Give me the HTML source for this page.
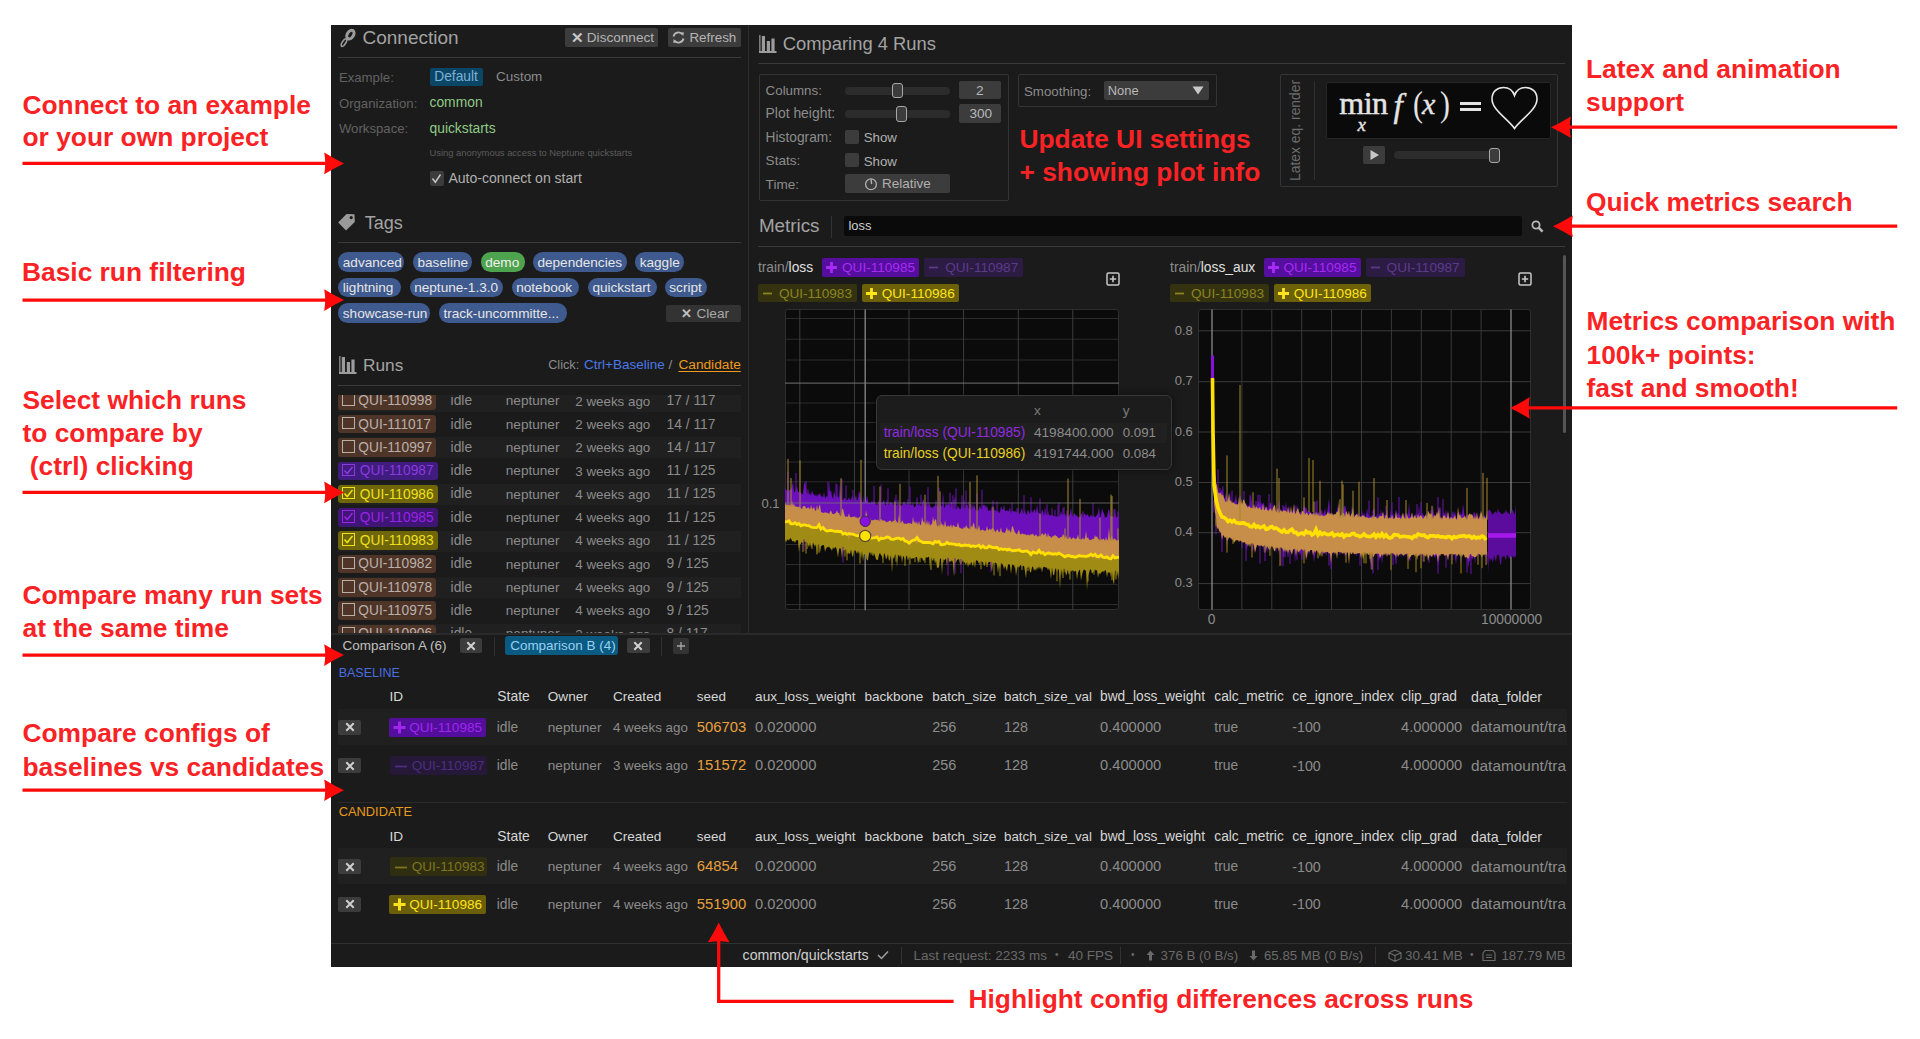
<!DOCTYPE html>
<html><head><meta charset="utf-8"><style>
html,body{margin:0;padding:0;}
body{width:1920px;height:1039px;position:relative;overflow:hidden;background:#fff;font-family:"Liberation Sans",sans-serif;}
.t{position:absolute;white-space:nowrap;line-height:1;}
.r{position:absolute;box-sizing:border-box;}
svg{position:absolute;left:0;top:0;}

</style></head><body>
<div class="r" style="left:331.0px;top:25.0px;width:1241.0px;height:942.0px;background:#1b1b1b;"></div>
<svg style="left:334px;top:25px" width="26" height="26" viewBox="0 0 26 26"><ellipse cx="16.4" cy="9.6" rx="4.7" ry="3.1" transform="rotate(-58 16.4 9.6)" fill="none" stroke="#9c9c9c" stroke-width="3.1"/><ellipse cx="10.0" cy="17.6" rx="4.3" ry="1.7" transform="rotate(-58 10 17.6)" fill="none" stroke="#9c9c9c" stroke-width="1.6"/></svg>
<div class="t" style="left:362.5px;top:28.2px;font-size:19px;color:#a3a3a3;">Connection</div>
<div class="r" style="left:565.4px;top:28.1px;width:92.9px;height:18.8px;background:#3c3c3c;border-radius:2px"></div>
<div class="t" style="left:570.5px;top:29.8px;font-size:15px;color:#c8c8c8;font-weight:bold">&#x2715;</div>
<div class="t" style="left:586.8px;top:31.2px;font-size:13.6px;color:#b4b4b4;">Disconnect</div>
<div class="r" style="left:667.5px;top:28.1px;width:73.5px;height:18.8px;background:#3c3c3c;border-radius:2px"></div>
<svg style="left:671px;top:30px" width="15" height="15" viewBox="0 0 15 15"><path d="M2.5,6.5 A5,5 0 0 1 11.5,4.5 M12.5,8.5 A5,5 0 0 1 3.5,10.5" fill="none" stroke="#b8b8b8" stroke-width="1.8"/><path d="M9.5,2.5 L12.8,2.3 L12.3,6Z M5.5,12.5 L2.2,12.7 L2.7,9Z" fill="#b8b8b8"/></svg>
<div class="t" style="left:689.4px;top:31.4px;font-size:13.4px;color:#b4b4b4;">Refresh</div>
<div class="r" style="left:338.0px;top:57.0px;width:403.0px;height:1.0px;background:#3a3a3a;"></div>
<div class="t" style="left:338.9px;top:70.6px;font-size:13.2px;color:#626262;">Example:</div>
<div class="r" style="left:429.5px;top:67.7px;width:53.1px;height:18.3px;background:#0b4666;border-radius:2px"></div>
<div class="t" style="left:434.2px;top:70.0px;font-size:13.8px;color:#7cb0d6;">Default</div>
<div class="t" style="left:496.0px;top:70.2px;font-size:13.45px;color:#8c8c8c;">Custom</div>
<div class="t" style="left:338.9px;top:96.6px;font-size:13.2px;color:#626262;">Organization:</div>
<div class="t" style="left:429.5px;top:95.7px;font-size:13.85px;color:#8fca86;">common</div>
<div class="t" style="left:338.9px;top:122.0px;font-size:13.2px;color:#626262;">Workspace:</div>
<div class="t" style="left:429.5px;top:121.5px;font-size:13.83px;color:#8fca86;">quickstarts</div>
<div class="t" style="left:429.5px;top:148.5px;font-size:9.38px;color:#5c5c5c;">Using anonymous access to Neptune quickstarts</div>
<div class="r" style="left:429.5px;top:171.0px;width:14.5px;height:14.6px;background:#3c3c3c;border-radius:2px"></div>
<svg style="left:429px;top:171px" width="15" height="15" viewBox="0 0 15 15"><path d="M3.5,7.5 L6.3,11.2 L11.5,3.5" fill="none" stroke="#c8c8c8" stroke-width="1.4"/></svg>
<div class="t" style="left:448.4px;top:171.1px;font-size:14.05px;color:#b0b0b0;">Auto-connect on start</div>
<svg style="left:337px;top:212px" width="20" height="20" viewBox="0 0 20 20"><path d="M9.5,2 L17.5,2.2 L17.8,10 L9,18.5 L1.2,10.5Z" fill="#9a9a9a"/><circle cx="14.2" cy="5.6" r="1.6" fill="#1b1b1b"/></svg>
<div class="t" style="left:364.7px;top:214.0px;font-size:18.05px;color:#a3a3a3;">Tags</div>
<div class="r" style="left:338.0px;top:242.0px;width:403.0px;height:1.0px;background:#3a3a3a;"></div>
<div class="r" style="left:338.3px;top:252.4px;width:66.2px;height:19.5px;background:#3f5a8e;border-radius:9.75px"></div>
<div class="t" style="left:342.8px;top:256.0px;font-size:13.6px;color:#e6e6e6;">advanced</div>
<div class="r" style="left:413.0px;top:252.4px;width:58.8px;height:19.5px;background:#3f5a8e;border-radius:9.75px"></div>
<div class="t" style="left:417.5px;top:256.0px;font-size:13.6px;color:#e6e6e6;">baseline</div>
<div class="r" style="left:480.7px;top:252.4px;width:43.9px;height:19.5px;background:#4ea44e;border-radius:9.75px"></div>
<div class="t" style="left:485.2px;top:256.0px;font-size:13.6px;color:#f0f0f0;">demo</div>
<div class="r" style="left:532.9px;top:252.4px;width:93.8px;height:19.5px;background:#3f5a8e;border-radius:9.75px"></div>
<div class="t" style="left:537.4px;top:256.0px;font-size:13.6px;color:#e6e6e6;">dependencies</div>
<div class="r" style="left:635.2px;top:252.4px;width:49.2px;height:19.5px;background:#3f5a8e;border-radius:9.75px"></div>
<div class="t" style="left:639.7px;top:256.0px;font-size:13.6px;color:#e6e6e6;">kaggle</div>
<div class="r" style="left:338.3px;top:277.8px;width:62.4px;height:19.5px;background:#3f5a8e;border-radius:9.75px"></div>
<div class="t" style="left:342.8px;top:281.4px;font-size:13.6px;color:#e6e6e6;">lightning</div>
<div class="r" style="left:409.7px;top:277.8px;width:93.6px;height:19.5px;background:#3f5a8e;border-radius:9.75px"></div>
<div class="t" style="left:414.2px;top:281.4px;font-size:13.6px;color:#e6e6e6;">neptune-1.3.0</div>
<div class="r" style="left:511.7px;top:277.8px;width:67.4px;height:19.5px;background:#3f5a8e;border-radius:9.75px"></div>
<div class="t" style="left:516.2px;top:281.4px;font-size:13.6px;color:#e6e6e6;">notebook</div>
<div class="r" style="left:587.9px;top:277.8px;width:68.8px;height:19.5px;background:#3f5a8e;border-radius:9.75px"></div>
<div class="t" style="left:592.4px;top:281.4px;font-size:13.6px;color:#e6e6e6;">quickstart</div>
<div class="r" style="left:664.8px;top:277.8px;width:42.5px;height:19.5px;background:#3f5a8e;border-radius:9.75px"></div>
<div class="t" style="left:669.3px;top:281.4px;font-size:13.6px;color:#e6e6e6;">script</div>
<div class="r" style="left:338.3px;top:303.2px;width:91.7px;height:19.5px;background:#3f5a8e;border-radius:9.75px"></div>
<div class="t" style="left:342.8px;top:306.8px;font-size:13.6px;color:#e6e6e6;">showcase-run</div>
<div class="r" style="left:438.9px;top:303.2px;width:127.8px;height:19.5px;background:#3f5a8e;border-radius:9.75px"></div>
<div class="t" style="left:443.4px;top:306.8px;font-size:13.6px;color:#e6e6e6;">track-uncommitte...</div>
<div class="r" style="left:666.4px;top:305.0px;width:74.4px;height:17.0px;background:#333333;border-radius:2px"></div>
<div class="t" style="left:680.5px;top:307.3px;font-size:13px;color:#c0c0c0;font-weight:bold">&#x2715;</div>
<div class="t" style="left:696.5px;top:307.1px;font-size:13.6px;color:#a8a8a8;">Clear</div>
<svg style="left:339px;top:356px" width="19" height="19" viewBox="0 0 19 19"><rect x="0" y="0" width="1.6" height="18" fill="#9c9c9c" opacity="0.75"/><rect x="2.8" y="1" width="3.2" height="16" fill="#9c9c9c"/><rect x="7.8" y="6" width="3.2" height="11" fill="#9c9c9c"/><rect x="12.4" y="3.5" width="3.2" height="13.5" fill="#9c9c9c"/><rect x="0" y="16" width="17.5" height="2" fill="#9c9c9c"/></svg>
<div class="t" style="left:363.0px;top:357.1px;font-size:17.3px;color:#a3a3a3;">Runs</div>
<div class="t" style="left:548.2px;top:358.9px;font-size:12.7px;color:#8c8c8c;">Click:</div>
<div class="t" style="left:584.0px;top:358.3px;font-size:13.5px;color:#4a78e8;">Ctrl+Baseline</div>
<div class="t" style="left:668.5px;top:358.2px;font-size:13.6px;color:#8c8c8c;">/</div>
<div class="t" style="left:678.4px;top:358.1px;font-size:13.69px;color:#ee9a1a;text-decoration:underline;text-underline-offset:1.5px">Candidate</div>
<div class="r" style="left:338.0px;top:384.6px;width:403.0px;height:1.0px;background:#3a3a3a;"></div>
<div style="position:absolute;left:331px;top:395px;width:417px;height:238px;overflow:hidden">
<div class="r" style="left:7.0px;top:-4.2px;width:403.0px;height:21.0px;background:#202020;"></div>
<div class="r" style="left:7.4px;top:-3.4px;width:97.4px;height:18.6px;background:#4f3428;border-radius:3px"></div>
<div class="r" style="left:11.0px;top:-1.4px;width:12.5px;height:12.5px;background:transparent;border:1.5px solid #b9b0aa"></div>
<div class="t" style="left:27.3px;top:-0.7px;font-size:13.72px;color:#b9b0aa;">QUI-110998</div>
<div class="t" style="left:119.6px;top:-0.8px;font-size:13.8px;color:#8c8c8c;">idle</div>
<div class="t" style="left:174.8px;top:-0.6px;font-size:13.6px;color:#8c8c8c;">neptuner</div>
<div class="t" style="left:244.3px;top:-0.4px;font-size:13.35px;color:#8c8c8c;">2 weeks ago</div>
<div class="t" style="left:335.6px;top:-0.8px;font-size:13.79px;color:#8c8c8c;">17 / 117</div>
<div class="r" style="left:7.4px;top:19.9px;width:97.4px;height:18.6px;background:#4f3428;border-radius:3px"></div>
<div class="r" style="left:11.0px;top:21.9px;width:12.5px;height:12.5px;background:transparent;border:1.5px solid #b9b0aa"></div>
<div class="t" style="left:27.3px;top:22.6px;font-size:13.72px;color:#b9b0aa;">QUI-111017</div>
<div class="t" style="left:119.6px;top:22.5px;font-size:13.8px;color:#8c8c8c;">idle</div>
<div class="t" style="left:174.8px;top:22.7px;font-size:13.6px;color:#8c8c8c;">neptuner</div>
<div class="t" style="left:244.3px;top:22.9px;font-size:13.35px;color:#8c8c8c;">2 weeks ago</div>
<div class="t" style="left:335.6px;top:22.5px;font-size:13.79px;color:#8c8c8c;">14 / 117</div>
<div class="r" style="left:7.0px;top:42.4px;width:403.0px;height:21.0px;background:#202020;"></div>
<div class="r" style="left:7.4px;top:43.2px;width:97.4px;height:18.6px;background:#4f3428;border-radius:3px"></div>
<div class="r" style="left:11.0px;top:45.2px;width:12.5px;height:12.5px;background:transparent;border:1.5px solid #b9b0aa"></div>
<div class="t" style="left:27.3px;top:45.9px;font-size:13.72px;color:#b9b0aa;">QUI-110997</div>
<div class="t" style="left:119.6px;top:45.8px;font-size:13.8px;color:#8c8c8c;">idle</div>
<div class="t" style="left:174.8px;top:46.0px;font-size:13.6px;color:#8c8c8c;">neptuner</div>
<div class="t" style="left:244.3px;top:46.2px;font-size:13.35px;color:#8c8c8c;">2 weeks ago</div>
<div class="t" style="left:335.6px;top:45.8px;font-size:13.79px;color:#8c8c8c;">14 / 117</div>
<div class="r" style="left:7.4px;top:66.5px;width:99.4px;height:18.6px;background:#401c7e;border-radius:3px"></div>
<div class="r" style="left:11.0px;top:68.5px;width:12.5px;height:12.5px;background:transparent;border:1.5px solid #8a3ade"></div>
<svg style="left:11.0px;top:68.5px" width="13" height="13" viewBox="0 0 13 13"><path d="M2.5,6.5 L5.2,9.5 L10.5,3" fill="none" stroke="#8a3ade" stroke-width="1.5"/></svg>
<div class="t" style="left:28.8px;top:69.2px;font-size:13.72px;color:#8a3ade;">QUI-110987</div>
<div class="t" style="left:119.6px;top:69.1px;font-size:13.8px;color:#8c8c8c;">idle</div>
<div class="t" style="left:174.8px;top:69.3px;font-size:13.6px;color:#8c8c8c;">neptuner</div>
<div class="t" style="left:244.3px;top:69.5px;font-size:13.35px;color:#8c8c8c;">3 weeks ago</div>
<div class="t" style="left:335.6px;top:69.1px;font-size:13.79px;color:#8c8c8c;">11 / 125</div>
<div class="r" style="left:7.0px;top:89.0px;width:403.0px;height:21.0px;background:#202020;"></div>
<div class="r" style="left:7.4px;top:89.8px;width:99.4px;height:18.6px;background:#6e6608;border-radius:3px"></div>
<div class="r" style="left:11.0px;top:91.8px;width:12.5px;height:12.5px;background:transparent;border:1.5px solid #f0e020"></div>
<svg style="left:11.0px;top:91.80000000000001px" width="13" height="13" viewBox="0 0 13 13"><path d="M2.5,6.5 L5.2,9.5 L10.5,3" fill="none" stroke="#f0e020" stroke-width="1.5"/></svg>
<div class="t" style="left:28.8px;top:92.5px;font-size:13.72px;color:#f0e020;">QUI-110986</div>
<div class="t" style="left:119.6px;top:92.4px;font-size:13.8px;color:#8c8c8c;">idle</div>
<div class="t" style="left:174.8px;top:92.6px;font-size:13.6px;color:#8c8c8c;">neptuner</div>
<div class="t" style="left:244.3px;top:92.8px;font-size:13.35px;color:#8c8c8c;">4 weeks ago</div>
<div class="t" style="left:335.6px;top:92.4px;font-size:13.79px;color:#8c8c8c;">11 / 125</div>
<div class="r" style="left:7.4px;top:113.1px;width:99.4px;height:18.6px;background:#3f1676;border-radius:3px"></div>
<div class="r" style="left:11.0px;top:115.1px;width:12.5px;height:12.5px;background:transparent;border:1.5px solid #9c22e6"></div>
<svg style="left:11.0px;top:115.10000000000002px" width="13" height="13" viewBox="0 0 13 13"><path d="M2.5,6.5 L5.2,9.5 L10.5,3" fill="none" stroke="#9c22e6" stroke-width="1.5"/></svg>
<div class="t" style="left:28.8px;top:115.8px;font-size:13.72px;color:#9c22e6;">QUI-110985</div>
<div class="t" style="left:119.6px;top:115.7px;font-size:13.8px;color:#8c8c8c;">idle</div>
<div class="t" style="left:174.8px;top:115.9px;font-size:13.6px;color:#8c8c8c;">neptuner</div>
<div class="t" style="left:244.3px;top:116.1px;font-size:13.35px;color:#8c8c8c;">4 weeks ago</div>
<div class="t" style="left:335.6px;top:115.7px;font-size:13.79px;color:#8c8c8c;">11 / 125</div>
<div class="r" style="left:7.0px;top:135.6px;width:403.0px;height:21.0px;background:#202020;"></div>
<div class="r" style="left:7.4px;top:136.4px;width:99.4px;height:18.6px;background:#6e6608;border-radius:3px"></div>
<div class="r" style="left:11.0px;top:138.4px;width:12.5px;height:12.5px;background:transparent;border:1.5px solid #f0e020"></div>
<svg style="left:11.0px;top:138.4000000000001px" width="13" height="13" viewBox="0 0 13 13"><path d="M2.5,6.5 L5.2,9.5 L10.5,3" fill="none" stroke="#f0e020" stroke-width="1.5"/></svg>
<div class="t" style="left:28.8px;top:139.1px;font-size:13.72px;color:#f0e020;">QUI-110983</div>
<div class="t" style="left:119.6px;top:139.0px;font-size:13.8px;color:#8c8c8c;">idle</div>
<div class="t" style="left:174.8px;top:139.2px;font-size:13.6px;color:#8c8c8c;">neptuner</div>
<div class="t" style="left:244.3px;top:139.4px;font-size:13.35px;color:#8c8c8c;">4 weeks ago</div>
<div class="t" style="left:335.6px;top:139.0px;font-size:13.79px;color:#8c8c8c;">11 / 125</div>
<div class="r" style="left:7.4px;top:159.7px;width:97.4px;height:18.6px;background:#4f3428;border-radius:3px"></div>
<div class="r" style="left:11.0px;top:161.7px;width:12.5px;height:12.5px;background:transparent;border:1.5px solid #b9b0aa"></div>
<div class="t" style="left:27.3px;top:162.4px;font-size:13.72px;color:#b9b0aa;">QUI-110982</div>
<div class="t" style="left:119.6px;top:162.3px;font-size:13.8px;color:#8c8c8c;">idle</div>
<div class="t" style="left:174.8px;top:162.5px;font-size:13.6px;color:#8c8c8c;">neptuner</div>
<div class="t" style="left:244.3px;top:162.7px;font-size:13.35px;color:#8c8c8c;">4 weeks ago</div>
<div class="t" style="left:335.6px;top:162.3px;font-size:13.79px;color:#8c8c8c;">9 / 125</div>
<div class="r" style="left:7.0px;top:182.2px;width:403.0px;height:21.0px;background:#202020;"></div>
<div class="r" style="left:7.4px;top:183.0px;width:97.4px;height:18.6px;background:#4f3428;border-radius:3px"></div>
<div class="r" style="left:11.0px;top:185.0px;width:12.5px;height:12.5px;background:transparent;border:1.5px solid #b9b0aa"></div>
<div class="t" style="left:27.3px;top:185.7px;font-size:13.72px;color:#b9b0aa;">QUI-110978</div>
<div class="t" style="left:119.6px;top:185.6px;font-size:13.8px;color:#8c8c8c;">idle</div>
<div class="t" style="left:174.8px;top:185.8px;font-size:13.6px;color:#8c8c8c;">neptuner</div>
<div class="t" style="left:244.3px;top:186.0px;font-size:13.35px;color:#8c8c8c;">4 weeks ago</div>
<div class="t" style="left:335.6px;top:185.6px;font-size:13.79px;color:#8c8c8c;">9 / 125</div>
<div class="r" style="left:7.4px;top:206.3px;width:97.4px;height:18.6px;background:#4f3428;border-radius:3px"></div>
<div class="r" style="left:11.0px;top:208.3px;width:12.5px;height:12.5px;background:transparent;border:1.5px solid #b9b0aa"></div>
<div class="t" style="left:27.3px;top:209.0px;font-size:13.72px;color:#b9b0aa;">QUI-110975</div>
<div class="t" style="left:119.6px;top:208.9px;font-size:13.8px;color:#8c8c8c;">idle</div>
<div class="t" style="left:174.8px;top:209.1px;font-size:13.6px;color:#8c8c8c;">neptuner</div>
<div class="t" style="left:244.3px;top:209.3px;font-size:13.35px;color:#8c8c8c;">4 weeks ago</div>
<div class="t" style="left:335.6px;top:208.9px;font-size:13.79px;color:#8c8c8c;">9 / 125</div>
<div class="r" style="left:7.0px;top:228.8px;width:403.0px;height:21.0px;background:#202020;"></div>
<div class="r" style="left:7.4px;top:229.6px;width:97.4px;height:18.6px;background:#4f3428;border-radius:3px"></div>
<div class="r" style="left:11.0px;top:231.6px;width:12.5px;height:12.5px;background:transparent;border:1.5px solid #b9b0aa"></div>
<div class="t" style="left:27.3px;top:232.3px;font-size:13.72px;color:#b9b0aa;">QUI-110906</div>
<div class="t" style="left:119.6px;top:232.2px;font-size:13.8px;color:#8c8c8c;">idle</div>
<div class="t" style="left:174.8px;top:232.4px;font-size:13.6px;color:#8c8c8c;">neptuner</div>
<div class="t" style="left:244.3px;top:232.6px;font-size:13.35px;color:#8c8c8c;">2 weeks ago</div>
<div class="t" style="left:335.6px;top:232.2px;font-size:13.79px;color:#8c8c8c;">8 / 117</div>
</div>
<div class="r" style="left:748.2px;top:25.0px;width:1.0px;height:608.0px;background:#2e2e2e;"></div>
<svg style="left:759px;top:35px" width="19" height="19" viewBox="0 0 19 19"><rect x="0" y="0" width="1.6" height="18" fill="#9c9c9c" opacity="0.75"/><rect x="2.8" y="1" width="3.2" height="16" fill="#9c9c9c"/><rect x="7.8" y="6" width="3.2" height="11" fill="#9c9c9c"/><rect x="12.4" y="3.5" width="3.2" height="13.5" fill="#9c9c9c"/><rect x="0" y="16" width="17.5" height="2" fill="#9c9c9c"/></svg>
<div class="t" style="left:782.8px;top:34.9px;font-size:18.38px;color:#a3a3a3;">Comparing 4 Runs</div>
<div class="r" style="left:757.8px;top:63.3px;width:807.2px;height:1.0px;background:#3a3a3a;"></div>
<div class="r" style="left:758.8px;top:74.3px;width:249.8px;height:126.4px;background:transparent;border:1px solid #343434;border-radius:2px"></div>
<div class="t" style="left:765.6px;top:84.4px;font-size:13.33px;color:#8c8c8c;">Columns:</div>
<div class="t" style="left:765.6px;top:106.9px;font-size:13.9px;color:#8c8c8c;">Plot height:</div>
<div class="t" style="left:765.6px;top:130.7px;font-size:13.76px;color:#8c8c8c;">Histogram:</div>
<div class="t" style="left:765.6px;top:154.0px;font-size:13.6px;color:#8c8c8c;">Stats:</div>
<div class="t" style="left:765.6px;top:177.7px;font-size:13.6px;color:#8c8c8c;">Time:</div>
<div class="r" style="left:844.8px;top:86.6px;width:105.6px;height:8.0px;background:#2c2c2c;border-radius:4px"></div>
<div class="r" style="left:891.9px;top:82.8px;width:11.4px;height:15.7px;background:#3c3c3c;border:1.4px solid #a8a8a8;border-radius:3px"></div>
<div class="r" style="left:844.8px;top:109.8px;width:105.6px;height:8.0px;background:#2c2c2c;border-radius:4px"></div>
<div class="r" style="left:896.0px;top:106.0px;width:11.4px;height:15.7px;background:#3c3c3c;border:1.4px solid #a8a8a8;border-radius:3px"></div>
<div class="r" style="left:959.2px;top:81.1px;width:42.0px;height:18.4px;background:#3c3c3c;border-radius:2px"></div>
<div class="t" style="left:976.0px;top:84.0px;font-size:13.6px;color:#b8b8b8;">2</div>
<div class="r" style="left:959.2px;top:104.1px;width:42.0px;height:18.7px;background:#3c3c3c;border-radius:2px"></div>
<div class="t" style="left:969.5px;top:107.3px;font-size:13.6px;color:#b8b8b8;">300</div>
<div class="r" style="left:844.8px;top:129.6px;width:14.2px;height:14.4px;background:#3c3c3c;border-radius:2px"></div>
<div class="t" style="left:863.7px;top:131.2px;font-size:13.3px;color:#b0b0b0;">Show</div>
<div class="r" style="left:844.8px;top:152.9px;width:14.2px;height:14.4px;background:#3c3c3c;border-radius:2px"></div>
<div class="t" style="left:863.7px;top:154.5px;font-size:13.3px;color:#b0b0b0;">Show</div>
<div class="r" style="left:844.8px;top:174.0px;width:105.6px;height:18.5px;background:#3c3c3c;border-radius:2px"></div>
<svg style="left:864px;top:176.5px" width="14" height="14" viewBox="0 0 14 14"><circle cx="7" cy="7.3" r="5.4" fill="none" stroke="#b0b0b0" stroke-width="1.3"/><path d="M7,2 L7.6,7.2" stroke="#b0b0b0" stroke-width="1.4"/></svg>
<div class="t" style="left:882.0px;top:177.4px;font-size:13.5px;color:#b0b0b0;">Relative</div>
<div class="r" style="left:1017.8px;top:74.3px;width:199.4px;height:32.9px;background:transparent;border:1px solid #343434;border-radius:2px"></div>
<div class="t" style="left:1024.0px;top:84.7px;font-size:13.29px;color:#8c8c8c;">Smoothing:</div>
<div class="r" style="left:1104.2px;top:81.3px;width:104.8px;height:18.3px;background:#3c3c3c;border-radius:2px"></div>
<div class="t" style="left:1107.8px;top:84.7px;font-size:12.9px;color:#b8b8b8;">None</div>
<svg style="left:1192px;top:85.5px" width="12" height="9" viewBox="0 0 12 9"><path d="M0.5,0.5 H11.5 L6,8.5Z" fill="#c8c8c8"/></svg>
<div class="r" style="left:1280.0px;top:74.3px;width:278.4px;height:113.1px;background:transparent;border:1px solid #343434;border-radius:2px"></div>
<div class="t" style="left:1289.0px;top:180.7px;font-size:13.9px;color:#6c6c6c;transform:rotate(-90deg);transform-origin:0 0;">Latex eq. render</div>
<div class="r" style="left:1313.8px;top:81.2px;width:1.0px;height:98.6px;background:#303030;"></div>
<div class="r" style="left:1326.0px;top:81.9px;width:224.5px;height:56.7px;background:#0a0a0a;border:1px solid #262626;border-radius:2px"></div>
<div class="t" style="left:1339.3px;top:87.2px;font-size:32px;color:#e4e4e4;font-family:Liberation Serif,serif;letter-spacing:-0.5px;-webkit-text-stroke:0.5px #e4e4e4">min</div>
<div class="t" style="left:1357.5px;top:115.4px;font-size:19px;color:#e4e4e4;font-family:Liberation Serif,serif;font-style:italic;-webkit-text-stroke:0.4px #e4e4e4">x</div>
<div class="t" style="left:1393.5px;top:89.6px;font-size:33px;color:#e4e4e4;font-family:Liberation Serif,serif;font-style:italic;-webkit-text-stroke:0.4px #e4e4e4">f</div>
<div class="t" style="left:1412.5px;top:86.9px;font-size:35px;color:#e4e4e4;font-family:Liberation Serif,serif;transform:scaleX(0.85);transform-origin:0 0">(</div>
<div class="t" style="left:1422.0px;top:89.4px;font-size:30px;color:#e4e4e4;font-family:Liberation Serif,serif;font-style:italic;-webkit-text-stroke:0.4px #e4e4e4">x</div>
<div class="t" style="left:1439.5px;top:86.9px;font-size:35px;color:#e4e4e4;font-family:Liberation Serif,serif;transform:scaleX(0.85);transform-origin:0 0">)</div>
<div class="r" style="left:1460.0px;top:101.8px;width:21.3px;height:2.8px;background:#e4e4e4;"></div>
<div class="r" style="left:1460.0px;top:108.2px;width:21.3px;height:2.8px;background:#e4e4e4;"></div>
<svg style="left:1490px;top:86px" width="50" height="45" viewBox="0 0 50 45"><path d="M24.5,42.5 C18,33 2,24 2,13 C2,5.5 7.5,1.5 13.5,1.5 C19,1.5 23,5 24.5,9.5 C26,5 30,1.5 35.5,1.5 C41.5,1.5 47,5.5 47,13 C47,24 31,33 24.5,42.5Z" fill="none" stroke="#e8e8e8" stroke-width="1.6"/></svg>
<div class="r" style="left:1363.1px;top:145.5px;width:22.4px;height:18.9px;background:#3c3c3c;border-radius:2px"></div>
<svg style="left:1368px;top:149px" width="12" height="12" viewBox="0 0 12 12"><path d="M2.5,1 L11,6 L2.5,11Z" fill="#c8c8c8"/></svg>
<div class="r" style="left:1394.0px;top:151.2px;width:105.0px;height:8.0px;background:#2c2c2c;border-radius:4px"></div>
<div class="r" style="left:1488.6px;top:147.9px;width:11.4px;height:14.8px;background:#3c3c3c;border:1.4px solid #a8a8a8;border-radius:3px"></div>
<div class="t" style="left:758.9px;top:217.2px;font-size:18.82px;color:#a3a3a3;">Metrics</div>
<div class="r" style="left:831.3px;top:216.0px;width:1.0px;height:22.3px;background:#333333;"></div>
<div class="r" style="left:844.3px;top:216.0px;width:677.7px;height:19.7px;background:#0a0a0a;border-radius:2px"></div>
<div class="t" style="left:848.4px;top:220.1px;font-size:12.93px;color:#d0d0d0;">loss</div>
<svg style="left:1530px;top:219px" width="16" height="16" viewBox="0 0 16 16"><circle cx="6" cy="6" r="3.6" fill="none" stroke="#b8b8b8" stroke-width="1.8"/><path d="M8.6,8.6 L12.6,12.6" stroke="#b8b8b8" stroke-width="2.6"/></svg>
<div class="r" style="left:757.8px;top:246.2px;width:807.2px;height:1.0px;background:#3a3a3a;"></div>
<div class="t" style="left:757.9px;top:260.9px;font-size:13.8px;color:#8c8c8c;">train/<span style="color:#e0e0e0">loss</span></div>
<div class="t" style="left:1170.1px;top:260.9px;font-size:13.8px;color:#8c8c8c;">train/<span style="color:#e0e0e0">loss_aux</span></div>
<div class="r" style="left:822.2px;top:258.3px;width:97.0px;height:18.4px;background:#560e9e;border-radius:2px"></div>
<svg style="left:825.2px;top:261.3px" width="13" height="13" viewBox="0 0 13 13"><path d="M6.5,1 V12 M1,6.5 H12" stroke="#a62cf4" stroke-width="2.8"/></svg>
<div class="t" style="left:842.0px;top:260.8px;font-size:13.6px;color:#a62cf4;">QUI-110985</div>
<div class="r" style="left:924.2px;top:258.3px;width:99.3px;height:18.4px;background:#2c1c44;border-radius:2px"></div>
<svg style="left:927.2px;top:261.3px" width="13" height="13" viewBox="0 0 13 13"><path d="M2,6.5 H11" stroke="#5c3a8a" stroke-width="1.8"/></svg>
<div class="t" style="left:945.2px;top:260.8px;font-size:13.6px;color:#5c3a8a;">QUI-110987</div>
<div class="r" style="left:757.9px;top:283.6px;width:99.0px;height:18.9px;background:#35330f;border-radius:2px"></div>
<svg style="left:760.9px;top:286.6px" width="13" height="13" viewBox="0 0 13 13"><path d="M2,6.5 H11" stroke="#8a8420" stroke-width="1.8"/></svg>
<div class="t" style="left:778.9px;top:286.6px;font-size:13.6px;color:#8a8420;">QUI-110983</div>
<div class="r" style="left:861.9px;top:283.6px;width:96.9px;height:18.9px;background:#6c6008;border-radius:2px"></div>
<svg style="left:864.9px;top:286.6px" width="13" height="13" viewBox="0 0 13 13"><path d="M6.5,1 V12 M1,6.5 H12" stroke="#ffe61a" stroke-width="2.8"/></svg>
<div class="t" style="left:881.7px;top:286.6px;font-size:13.6px;color:#ffe61a;">QUI-110986</div>
<div class="r" style="left:1263.6px;top:258.3px;width:97.0px;height:18.4px;background:#560e9e;border-radius:2px"></div>
<svg style="left:1266.6px;top:261.3px" width="13" height="13" viewBox="0 0 13 13"><path d="M6.5,1 V12 M1,6.5 H12" stroke="#a62cf4" stroke-width="2.8"/></svg>
<div class="t" style="left:1283.4px;top:260.8px;font-size:13.6px;color:#a62cf4;">QUI-110985</div>
<div class="r" style="left:1365.6px;top:258.3px;width:99.3px;height:18.4px;background:#2c1c44;border-radius:2px"></div>
<svg style="left:1368.6px;top:261.3px" width="13" height="13" viewBox="0 0 13 13"><path d="M2,6.5 H11" stroke="#5c3a8a" stroke-width="1.8"/></svg>
<div class="t" style="left:1386.6px;top:260.8px;font-size:13.6px;color:#5c3a8a;">QUI-110987</div>
<div class="r" style="left:1170.0px;top:283.6px;width:99.0px;height:18.9px;background:#35330f;border-radius:2px"></div>
<svg style="left:1173.0px;top:286.6px" width="13" height="13" viewBox="0 0 13 13"><path d="M2,6.5 H11" stroke="#8a8420" stroke-width="1.8"/></svg>
<div class="t" style="left:1191.0px;top:286.6px;font-size:13.6px;color:#8a8420;">QUI-110983</div>
<div class="r" style="left:1274.0px;top:283.6px;width:96.9px;height:18.9px;background:#6c6008;border-radius:2px"></div>
<svg style="left:1277.0px;top:286.6px" width="13" height="13" viewBox="0 0 13 13"><path d="M6.5,1 V12 M1,6.5 H12" stroke="#ffe61a" stroke-width="2.8"/></svg>
<div class="t" style="left:1293.8px;top:286.6px;font-size:13.6px;color:#ffe61a;">QUI-110986</div>
<svg style="left:1106.3px;top:272px" width="14" height="14" viewBox="0 0 14 14"><rect x="1" y="1" width="12" height="12" rx="1.5" fill="none" stroke="#c8c8c8" stroke-width="1.5"/><path d="M7,3.8 V10.2 M3.8,7 H10.2" stroke="#c8c8c8" stroke-width="1.6"/></svg>
<svg style="left:1518.2px;top:272px" width="14" height="14" viewBox="0 0 14 14"><rect x="1" y="1" width="12" height="12" rx="1.5" fill="none" stroke="#c8c8c8" stroke-width="1.5"/><path d="M7,3.8 V10.2 M3.8,7 H10.2" stroke="#c8c8c8" stroke-width="1.6"/></svg>
<div class="r" style="left:785.0px;top:309.3px;width:334.0px;height:301.2px;background:#0b0b0b;border:1px solid #2e2e2e;border-radius:3px"></div>
<svg style="left:0;top:0" width="1920" height="1039"><clipPath id="cl"><rect x="785" y="309.3" width="334" height="301.2"/></clipPath><g clip-path="url(#cl)"><line x1="785" y1="318.5" x2="1119" y2="318.5" stroke="#2c2c2c" stroke-width="1"/><line x1="785" y1="339.2" x2="1119" y2="339.2" stroke="#2c2c2c" stroke-width="1"/><line x1="785" y1="360.0" x2="1119" y2="360.0" stroke="#2c2c2c" stroke-width="1"/><line x1="785" y1="403.0" x2="1119" y2="403.0" stroke="#2c2c2c" stroke-width="1"/><line x1="785" y1="422.5" x2="1119" y2="422.5" stroke="#2c2c2c" stroke-width="1"/><line x1="785" y1="442.0" x2="1119" y2="442.0" stroke="#2c2c2c" stroke-width="1"/><line x1="785" y1="462.0" x2="1119" y2="462.0" stroke="#2c2c2c" stroke-width="1"/><line x1="785" y1="481.8" x2="1119" y2="481.8" stroke="#2c2c2c" stroke-width="1"/><line x1="785" y1="524.0" x2="1119" y2="524.0" stroke="#2c2c2c" stroke-width="1"/><line x1="785" y1="544.5" x2="1119" y2="544.5" stroke="#2c2c2c" stroke-width="1"/><line x1="785" y1="564.5" x2="1119" y2="564.5" stroke="#2c2c2c" stroke-width="1"/><line x1="785" y1="584.6" x2="1119" y2="584.6" stroke="#2c2c2c" stroke-width="1"/><line x1="785" y1="604.5" x2="1119" y2="604.5" stroke="#2c2c2c" stroke-width="1"/><line x1="799.8" y1="309.3" x2="799.8" y2="610.5" stroke="#3c3c3c" stroke-width="1"/><line x1="854.5" y1="309.3" x2="854.5" y2="610.5" stroke="#3c3c3c" stroke-width="1"/><line x1="909.0" y1="309.3" x2="909.0" y2="610.5" stroke="#3c3c3c" stroke-width="1"/><line x1="963.6" y1="309.3" x2="963.6" y2="610.5" stroke="#3c3c3c" stroke-width="1"/><line x1="1018.3" y1="309.3" x2="1018.3" y2="610.5" stroke="#3c3c3c" stroke-width="1"/><line x1="1072.8" y1="309.3" x2="1072.8" y2="610.5" stroke="#3c3c3c" stroke-width="1"/><line x1="865.2" y1="309.3" x2="865.2" y2="610.5" stroke="#8a8a8a" stroke-width="1.3"/><polygon points="785.0,488.5 786.0,489.2 787.0,490.7 788.0,491.6 789.0,489.8 790.0,490.2 791.0,489.1 792.0,485.9 793.0,481.7 794.0,491.7 795.0,492.8 796.0,489.0 797.0,485.8 798.0,491.9 799.0,492.0 800.0,493.0 801.0,492.0 802.0,494.4 803.0,493.8 804.0,484.1 805.0,481.8 806.0,487.4 807.0,494.4 808.0,491.6 809.0,495.3 810.0,492.2 811.0,495.8 812.0,489.8 813.0,494.0 814.0,494.0 815.0,496.4 816.0,494.0 817.0,497.1 818.0,493.7 819.0,495.6 820.0,492.2 821.0,496.7 822.0,495.7 823.0,497.8 824.0,491.2 825.0,498.5 826.0,497.0 827.0,495.9 828.0,497.5 829.0,480.3 830.0,492.1 831.0,489.9 832.0,496.6 833.0,499.1 834.0,490.7 835.0,495.0 836.0,498.6 837.0,493.9 838.0,498.0 839.0,496.6 840.0,482.3 841.0,496.0 842.0,500.1 843.0,499.9 844.0,498.5 845.0,497.4 846.0,501.0 847.0,499.7 848.0,499.9 849.0,497.3 850.0,499.5 851.0,500.3 852.0,495.7 853.0,498.2 854.0,501.7 855.0,497.9 856.0,495.1 857.0,501.0 858.0,499.2 859.0,490.5 860.0,493.8 861.0,499.3 862.0,501.4 863.0,502.6 864.0,495.5 865.0,502.7 866.0,501.9 867.0,495.3 868.0,500.9 869.0,502.7 870.0,503.3 871.0,503.1 872.0,499.9 873.0,503.7 874.0,499.8 875.0,503.0 876.0,504.6 877.0,504.7 878.0,503.4 879.0,499.6 880.0,503.3 881.0,502.2 882.0,503.3 883.0,501.4 884.0,499.8 885.0,504.9 886.0,505.3 887.0,498.6 888.0,504.4 889.0,505.3 890.0,501.0 891.0,503.0 892.0,503.3 893.0,503.8 894.0,505.6 895.0,496.3 896.0,505.9 897.0,504.8 898.0,504.5 899.0,503.1 900.0,506.4 901.0,505.6 902.0,505.3 903.0,503.4 904.0,501.1 905.0,503.5 906.0,503.7 907.0,505.0 908.0,502.1 909.0,506.2 910.0,505.0 911.0,503.9 912.0,505.5 913.0,502.3 914.0,507.0 915.0,507.3 916.0,504.6 917.0,502.5 918.0,506.2 919.0,502.8 920.0,505.6 921.0,506.6 922.0,504.7 923.0,498.8 924.0,501.3 925.0,506.9 926.0,501.2 927.0,504.3 928.0,507.7 929.0,502.3 930.0,505.1 931.0,508.1 932.0,507.0 933.0,508.0 934.0,505.7 935.0,506.3 936.0,498.7 937.0,507.3 938.0,502.8 939.0,507.8 940.0,506.6 941.0,504.0 942.0,507.2 943.0,491.3 944.0,507.5 945.0,507.6 946.0,501.4 947.0,505.8 948.0,503.4 949.0,502.9 950.0,508.2 951.0,502.7 952.0,501.6 953.0,508.9 954.0,508.0 955.0,508.0 956.0,509.7 957.0,508.6 958.0,505.8 959.0,508.6 960.0,508.7 961.0,509.1 962.0,500.8 963.0,508.5 964.0,506.7 965.0,509.6 966.0,504.7 967.0,504.5 968.0,507.7 969.0,508.4 970.0,509.6 971.0,510.2 972.0,503.5 973.0,508.7 974.0,503.2 975.0,507.9 976.0,510.4 977.0,511.0 978.0,510.9 979.0,508.3 980.0,505.3 981.0,509.5 982.0,508.6 983.0,504.2 984.0,505.6 985.0,505.1 986.0,508.1 987.0,505.3 988.0,510.7 989.0,510.7 990.0,510.0 991.0,510.9 992.0,505.6 993.0,511.1 994.0,507.9 995.0,511.2 996.0,509.4 997.0,512.5 998.0,509.9 999.0,512.8 1000.0,512.5 1001.0,505.8 1002.0,509.1 1003.0,509.9 1004.0,504.3 1005.0,511.0 1006.0,511.1 1007.0,509.8 1008.0,511.8 1009.0,510.8 1010.0,507.0 1011.0,513.5 1012.0,511.1 1013.0,510.7 1014.0,511.9 1015.0,510.5 1016.0,512.5 1017.0,512.3 1018.0,512.5 1019.0,514.0 1020.0,513.7 1021.0,510.7 1022.0,507.6 1023.0,513.3 1024.0,513.3 1025.0,509.3 1026.0,514.4 1027.0,514.2 1028.0,511.1 1029.0,512.2 1030.0,514.0 1031.0,512.2 1032.0,509.7 1033.0,513.4 1034.0,509.1 1035.0,510.0 1036.0,512.9 1037.0,504.0 1038.0,512.2 1039.0,513.0 1040.0,514.8 1041.0,514.7 1042.0,509.2 1043.0,511.2 1044.0,516.1 1045.0,506.6 1046.0,514.5 1047.0,515.4 1048.0,510.2 1049.0,515.1 1050.0,515.5 1051.0,514.9 1052.0,515.3 1053.0,515.5 1054.0,516.6 1055.0,516.2 1056.0,516.2 1057.0,516.8 1058.0,515.5 1059.0,517.1 1060.0,515.4 1061.0,510.8 1062.0,515.5 1063.0,513.3 1064.0,515.7 1065.0,512.6 1066.0,517.4 1067.0,512.2 1068.0,517.2 1069.0,515.8 1070.0,514.0 1071.0,507.1 1072.0,515.7 1073.0,516.4 1074.0,513.4 1075.0,513.7 1076.0,515.7 1077.0,515.1 1078.0,517.6 1079.0,517.1 1080.0,517.1 1081.0,514.1 1082.0,513.2 1083.0,517.9 1084.0,513.8 1085.0,513.8 1086.0,516.0 1087.0,514.2 1088.0,514.6 1089.0,517.0 1090.0,516.8 1091.0,514.3 1092.0,517.1 1093.0,516.5 1094.0,515.6 1095.0,517.5 1096.0,515.9 1097.0,515.3 1098.0,512.7 1099.0,506.7 1100.0,517.9 1101.0,515.3 1102.0,508.1 1103.0,511.9 1104.0,513.1 1105.0,517.8 1106.0,517.3 1107.0,516.8 1108.0,511.5 1109.0,508.4 1110.0,515.2 1111.0,516.1 1112.0,516.7 1113.0,516.3 1114.0,517.2 1115.0,511.8 1116.0,518.0 1117.0,516.5 1118.0,516.8 1119.0,510.0 1119.0,549.6 1118.0,549.7 1117.0,550.1 1116.0,549.5 1115.0,550.0 1114.0,549.6 1113.0,550.1 1112.0,552.0 1111.0,549.1 1110.0,549.3 1109.0,551.7 1108.0,549.1 1107.0,549.1 1106.0,549.4 1105.0,549.0 1104.0,549.6 1103.0,549.4 1102.0,549.5 1101.0,548.9 1100.0,551.3 1099.0,550.5 1098.0,548.8 1097.0,550.7 1096.0,548.9 1095.0,550.1 1094.0,551.0 1093.0,548.5 1092.0,549.2 1091.0,548.7 1090.0,548.2 1089.0,548.4 1088.0,548.4 1087.0,549.0 1086.0,548.8 1085.0,551.3 1084.0,548.2 1083.0,548.7 1082.0,548.1 1081.0,549.6 1080.0,548.0 1079.0,548.6 1078.0,547.9 1077.0,548.0 1076.0,548.1 1075.0,547.6 1074.0,547.9 1073.0,549.0 1072.0,547.7 1071.0,548.2 1070.0,547.2 1069.0,547.3 1068.0,548.2 1067.0,548.0 1066.0,548.8 1065.0,547.2 1064.0,549.1 1063.0,548.1 1062.0,547.2 1061.0,546.8 1060.0,546.9 1059.0,547.3 1058.0,547.5 1057.0,546.5 1056.0,547.7 1055.0,546.4 1054.0,546.3 1053.0,547.0 1052.0,547.8 1051.0,546.1 1050.0,547.0 1049.0,546.1 1048.0,551.3 1047.0,546.1 1046.0,545.5 1045.0,547.0 1044.0,547.4 1043.0,545.6 1042.0,545.3 1041.0,545.3 1040.0,546.8 1039.0,545.2 1038.0,546.9 1037.0,545.3 1036.0,544.6 1035.0,544.9 1034.0,544.5 1033.0,546.0 1032.0,545.1 1031.0,546.7 1030.0,546.0 1029.0,545.8 1028.0,544.3 1027.0,545.6 1026.0,545.0 1025.0,547.2 1024.0,544.2 1023.0,543.8 1022.0,544.4 1021.0,543.6 1020.0,543.4 1019.0,543.4 1018.0,545.1 1017.0,543.3 1016.0,545.8 1015.0,542.7 1014.0,542.4 1013.0,544.4 1012.0,546.9 1011.0,543.2 1010.0,542.1 1009.0,542.5 1008.0,543.0 1007.0,543.2 1006.0,542.0 1005.0,543.3 1004.0,543.0 1003.0,542.1 1002.0,543.3 1001.0,541.2 1000.0,541.3 999.0,541.1 998.0,541.9 997.0,541.5 996.0,542.8 995.0,541.4 994.0,541.0 993.0,540.7 992.0,540.6 991.0,539.9 990.0,540.1 989.0,540.9 988.0,540.9 987.0,540.8 986.0,540.2 985.0,541.6 984.0,540.5 983.0,539.2 982.0,541.3 981.0,539.0 980.0,539.3 979.0,539.2 978.0,539.1 977.0,539.1 976.0,539.0 975.0,538.6 974.0,538.7 973.0,540.1 972.0,539.2 971.0,538.2 970.0,538.1 969.0,537.7 968.0,539.9 967.0,537.5 966.0,544.6 965.0,537.4 964.0,537.4 963.0,539.5 962.0,538.4 961.0,538.2 960.0,537.7 959.0,538.5 958.0,537.3 957.0,536.6 956.0,538.0 955.0,536.8 954.0,537.9 953.0,537.9 952.0,536.4 951.0,537.7 950.0,535.9 949.0,536.0 948.0,535.8 947.0,536.1 946.0,536.3 945.0,535.8 944.0,538.4 943.0,535.6 942.0,535.5 941.0,536.6 940.0,535.2 939.0,538.6 938.0,535.4 937.0,535.1 936.0,535.3 935.0,534.6 934.0,535.1 933.0,536.8 932.0,535.0 931.0,535.4 930.0,535.8 929.0,538.3 928.0,537.4 927.0,534.0 926.0,536.0 925.0,535.1 924.0,535.9 923.0,533.7 922.0,534.2 921.0,537.8 920.0,533.5 919.0,533.6 918.0,533.9 917.0,533.9 916.0,533.2 915.0,533.4 914.0,532.9 913.0,532.9 912.0,532.7 911.0,535.4 910.0,532.6 909.0,532.8 908.0,532.9 907.0,532.5 906.0,533.7 905.0,532.2 904.0,532.0 903.0,533.0 902.0,534.2 901.0,533.2 900.0,531.9 899.0,531.8 898.0,533.3 897.0,532.0 896.0,531.5 895.0,532.0 894.0,532.5 893.0,532.4 892.0,531.1 891.0,535.8 890.0,531.6 889.0,531.0 888.0,532.4 887.0,531.3 886.0,531.9 885.0,531.9 884.0,530.8 883.0,530.3 882.0,532.7 881.0,529.8 880.0,529.8 879.0,529.6 878.0,529.5 877.0,529.4 876.0,529.2 875.0,531.3 874.0,532.9 873.0,531.1 872.0,529.3 871.0,530.4 870.0,528.5 869.0,529.0 868.0,528.4 867.0,528.4 866.0,528.9 865.0,529.2 864.0,528.4 863.0,527.7 862.0,527.8 861.0,528.6 860.0,528.9 859.0,528.0 858.0,527.5 857.0,527.2 856.0,526.8 855.0,527.2 854.0,527.0 853.0,527.9 852.0,527.4 851.0,527.1 850.0,531.7 849.0,526.3 848.0,528.3 847.0,525.6 846.0,525.4 845.0,529.5 844.0,526.1 843.0,524.8 842.0,525.3 841.0,525.7 840.0,524.3 839.0,524.2 838.0,525.1 837.0,524.1 836.0,525.8 835.0,524.5 834.0,523.9 833.0,524.7 832.0,523.0 831.0,522.8 830.0,522.7 829.0,522.8 828.0,522.2 827.0,523.0 826.0,524.8 825.0,523.0 824.0,522.2 823.0,521.5 822.0,521.8 821.0,522.6 820.0,521.3 819.0,521.8 818.0,521.3 817.0,521.2 816.0,520.8 815.0,522.2 814.0,520.4 813.0,520.6 812.0,521.8 811.0,519.7 810.0,518.7 809.0,518.8 808.0,519.4 807.0,518.3 806.0,517.9 805.0,519.3 804.0,518.8 803.0,517.5 802.0,517.8 801.0,518.1 800.0,517.5 799.0,516.3 798.0,517.2 797.0,516.3 796.0,516.3 795.0,515.4 794.0,516.0 793.0,515.6 792.0,514.9 791.0,515.5 790.0,514.5 789.0,514.3 788.0,516.5 787.0,516.9 786.0,514.1 785.0,514.0" fill="#6c10bc"/><line x1="1024.0" y1="514.9" x2="1024.0" y2="495.2" stroke="#6a14b0" stroke-width="1.0"/><line x1="1055.0" y1="516.9" x2="1055.0" y2="510.0" stroke="#6a14b0" stroke-width="1.0"/><line x1="1047.0" y1="516.5" x2="1047.0" y2="504.3" stroke="#6a14b0" stroke-width="1.0"/><line x1="837.0" y1="500.4" x2="837.0" y2="484.5" stroke="#6a14b0" stroke-width="1.0"/><line x1="921.0" y1="507.7" x2="921.0" y2="494.6" stroke="#6a14b0" stroke-width="1.0"/><line x1="971.0" y1="510.8" x2="971.0" y2="503.9" stroke="#6a14b0" stroke-width="1.0"/><line x1="1118.0" y1="518.0" x2="1118.0" y2="511.5" stroke="#6a14b0" stroke-width="1.0"/><line x1="1063.0" y1="517.3" x2="1063.0" y2="508.2" stroke="#6a14b0" stroke-width="1.0"/><line x1="1028.0" y1="515.2" x2="1028.0" y2="510.3" stroke="#6a14b0" stroke-width="1.0"/><line x1="908.0" y1="507.0" x2="908.0" y2="499.1" stroke="#6a14b0" stroke-width="1.0"/><line x1="808.0" y1="495.6" x2="808.0" y2="489.3" stroke="#6a14b0" stroke-width="1.0"/><line x1="955.0" y1="509.7" x2="955.0" y2="497.4" stroke="#6a14b0" stroke-width="1.0"/><line x1="1064.0" y1="517.3" x2="1064.0" y2="506.9" stroke="#6a14b0" stroke-width="1.0"/><line x1="1059.0" y1="517.1" x2="1059.0" y2="502.5" stroke="#6a14b0" stroke-width="1.0"/><line x1="1114.0" y1="518.0" x2="1114.0" y2="509.0" stroke="#6a14b0" stroke-width="1.0"/><line x1="805.0" y1="495.0" x2="805.0" y2="490.4" stroke="#6a14b0" stroke-width="1.0"/><line x1="964.0" y1="510.3" x2="964.0" y2="500.4" stroke="#6a14b0" stroke-width="1.0"/><line x1="977.0" y1="511.3" x2="977.0" y2="493.7" stroke="#6a14b0" stroke-width="1.0"/><line x1="1115.0" y1="518.0" x2="1115.0" y2="509.4" stroke="#6a14b0" stroke-width="1.0"/><line x1="896.0" y1="506.2" x2="896.0" y2="494.9" stroke="#6a14b0" stroke-width="1.0"/><line x1="1040.0" y1="516.0" x2="1040.0" y2="498.5" stroke="#6a14b0" stroke-width="1.0"/><line x1="1012.0" y1="514.0" x2="1012.0" y2="502.7" stroke="#6a14b0" stroke-width="1.0"/><line x1="966.0" y1="510.5" x2="966.0" y2="490.5" stroke="#6a14b0" stroke-width="1.0"/><line x1="881.0" y1="505.1" x2="881.0" y2="484.6" stroke="#6a14b0" stroke-width="1.0"/><line x1="954.0" y1="509.7" x2="954.0" y2="500.1" stroke="#6a14b0" stroke-width="1.0"/><line x1="888.0" y1="505.7" x2="888.0" y2="488.4" stroke="#6a14b0" stroke-width="1.0"/><line x1="1052.0" y1="516.8" x2="1052.0" y2="508.2" stroke="#6a14b0" stroke-width="1.0"/><line x1="1018.0" y1="514.5" x2="1018.0" y2="508.0" stroke="#6a14b0" stroke-width="1.0"/><line x1="993.0" y1="512.5" x2="993.0" y2="500.6" stroke="#6a14b0" stroke-width="1.0"/><line x1="962.0" y1="510.2" x2="962.0" y2="495.4" stroke="#6a14b0" stroke-width="1.0"/><line x1="939.0" y1="508.8" x2="939.0" y2="487.9" stroke="#6a14b0" stroke-width="1.0"/><line x1="1083.0" y1="517.9" x2="1083.0" y2="511.3" stroke="#6a14b0" stroke-width="1.0"/><line x1="950.0" y1="509.4" x2="950.0" y2="492.6" stroke="#6a14b0" stroke-width="1.0"/><line x1="853.0" y1="502.4" x2="853.0" y2="489.9" stroke="#6a14b0" stroke-width="1.0"/><line x1="898.0" y1="506.4" x2="898.0" y2="500.0" stroke="#6a14b0" stroke-width="1.0"/><line x1="956.0" y1="509.8" x2="956.0" y2="488.3" stroke="#6a14b0" stroke-width="1.0"/><line x1="836.0" y1="500.2" x2="836.0" y2="483.7" stroke="#6a14b0" stroke-width="1.0"/><line x1="940.0" y1="508.8" x2="940.0" y2="502.5" stroke="#6a14b0" stroke-width="1.0"/><line x1="910.0" y1="507.1" x2="910.0" y2="486.8" stroke="#6a14b0" stroke-width="1.0"/><line x1="1017.0" y1="514.4" x2="1017.0" y2="508.5" stroke="#6a14b0" stroke-width="1.0"/><line x1="967.0" y1="510.5" x2="967.0" y2="504.9" stroke="#6a14b0" stroke-width="1.0"/><line x1="917.0" y1="507.5" x2="917.0" y2="497.5" stroke="#6a14b0" stroke-width="1.0"/><line x1="928.0" y1="508.1" x2="928.0" y2="487.2" stroke="#6a14b0" stroke-width="1.0"/><line x1="992.0" y1="512.4" x2="992.0" y2="507.8" stroke="#6a14b0" stroke-width="1.0"/><line x1="796.0" y1="493.3" x2="796.0" y2="472.8" stroke="#6a14b0" stroke-width="1.0"/><line x1="1093.0" y1="518.0" x2="1093.0" y2="503.0" stroke="#6a14b0" stroke-width="1.0"/><line x1="829.0" y1="499.2" x2="829.0" y2="494.0" stroke="#6a14b0" stroke-width="1.0"/><line x1="953.0" y1="509.6" x2="953.0" y2="495.4" stroke="#6a14b0" stroke-width="1.0"/><line x1="1058.0" y1="517.1" x2="1058.0" y2="504.8" stroke="#6a14b0" stroke-width="1.0"/><line x1="806.0" y1="495.2" x2="806.0" y2="481.1" stroke="#6a14b0" stroke-width="1.0"/><line x1="828.0" y1="499.0" x2="828.0" y2="481.8" stroke="#6a14b0" stroke-width="1.0"/><line x1="846.0" y1="501.6" x2="846.0" y2="485.4" stroke="#6a14b0" stroke-width="1.0"/><line x1="982.0" y1="511.6" x2="982.0" y2="489.7" stroke="#6a14b0" stroke-width="1.0"/><line x1="1067.0" y1="517.4" x2="1067.0" y2="510.6" stroke="#6a14b0" stroke-width="1.0"/><line x1="874.0" y1="504.6" x2="874.0" y2="485.9" stroke="#6a14b0" stroke-width="1.0"/><line x1="997.0" y1="512.8" x2="997.0" y2="501.4" stroke="#6a14b0" stroke-width="1.0"/><line x1="1031.0" y1="515.4" x2="1031.0" y2="497.3" stroke="#6a14b0" stroke-width="1.0"/><line x1="788.0" y1="491.6" x2="788.0" y2="471.6" stroke="#6a14b0" stroke-width="1.0"/><line x1="842.0" y1="501.1" x2="842.0" y2="479.2" stroke="#6a14b0" stroke-width="1.0"/><line x1="969.0" y1="510.7" x2="969.0" y2="501.9" stroke="#6a14b0" stroke-width="1.0"/><polygon points="785.0,519.3 786.0,519.5 787.0,519.5 788.0,519.0 789.0,520.2 790.0,520.3 791.0,521.2 792.0,519.5 793.0,520.7 794.0,521.5 795.0,521.7 796.0,521.0 797.0,522.4 798.0,522.7 799.0,520.7 800.0,523.0 801.0,523.6 802.0,521.6 803.0,524.0 804.0,523.0 805.0,524.1 806.0,520.5 807.0,524.7 808.0,523.0 809.0,524.9 810.0,524.4 811.0,525.1 812.0,525.6 813.0,526.2 814.0,526.4 815.0,526.6 816.0,525.5 817.0,527.1 818.0,525.6 819.0,526.5 820.0,527.2 821.0,527.1 822.0,528.0 823.0,528.2 824.0,528.2 825.0,528.5 826.0,528.0 827.0,528.8 828.0,528.1 829.0,527.4 830.0,529.4 831.0,527.5 832.0,529.9 833.0,530.0 834.0,528.1 835.0,528.7 836.0,530.1 837.0,530.2 838.0,530.6 839.0,530.8 840.0,530.2 841.0,531.2 842.0,530.8 843.0,529.1 844.0,531.7 845.0,531.7 846.0,532.2 847.0,530.8 848.0,532.5 849.0,532.4 850.0,530.8 851.0,532.6 852.0,532.3 853.0,532.8 854.0,531.2 855.0,530.8 856.0,532.6 857.0,533.7 858.0,531.7 859.0,533.3 860.0,534.2 861.0,534.2 862.0,533.8 863.0,534.2 864.0,534.2 865.0,532.1 866.0,534.2 867.0,534.4 868.0,534.6 869.0,534.2 870.0,533.1 871.0,534.1 872.0,535.1 873.0,534.8 874.0,535.3 875.0,535.3 876.0,534.8 877.0,535.8 878.0,536.1 879.0,535.9 880.0,535.5 881.0,534.7 882.0,536.6 883.0,534.5 884.0,536.9 885.0,536.0 886.0,536.3 887.0,537.1 888.0,537.2 889.0,536.7 890.0,536.7 891.0,537.0 892.0,537.4 893.0,537.7 894.0,537.5 895.0,537.5 896.0,536.6 897.0,536.9 898.0,538.4 899.0,538.3 900.0,536.6 901.0,538.2 902.0,537.5 903.0,538.3 904.0,538.2 905.0,538.2 906.0,538.4 907.0,538.8 908.0,538.1 909.0,539.2 910.0,538.0 911.0,539.1 912.0,537.9 913.0,537.9 914.0,537.7 915.0,538.6 916.0,539.4 917.0,539.0 918.0,540.1 919.0,540.1 920.0,540.1 921.0,540.4 922.0,539.4 923.0,538.0 924.0,540.2 925.0,540.7 926.0,540.3 927.0,540.3 928.0,540.3 929.0,537.3 930.0,540.8 931.0,540.9 932.0,539.6 933.0,538.9 934.0,540.0 935.0,539.5 936.0,539.1 937.0,541.5 938.0,540.8 939.0,541.9 940.0,541.6 941.0,541.4 942.0,541.2 943.0,542.2 944.0,539.2 945.0,540.9 946.0,541.5 947.0,541.1 948.0,540.4 949.0,541.0 950.0,541.6 951.0,539.0 952.0,540.2 953.0,542.0 954.0,542.4 955.0,541.5 956.0,543.1 957.0,540.4 958.0,542.5 959.0,542.0 960.0,543.7 961.0,543.4 962.0,543.6 963.0,543.1 964.0,543.8 965.0,543.4 966.0,544.1 967.0,544.3 968.0,543.4 969.0,544.4 970.0,542.5 971.0,544.6 972.0,544.8 973.0,544.9 974.0,544.9 975.0,542.9 976.0,545.0 977.0,544.9 978.0,544.6 979.0,542.5 980.0,545.4 981.0,543.6 982.0,545.6 983.0,542.4 984.0,545.9 985.0,546.1 986.0,546.1 987.0,542.5 988.0,545.4 989.0,546.6 990.0,546.2 991.0,545.0 992.0,545.9 993.0,547.1 994.0,545.6 995.0,546.2 996.0,546.8 997.0,547.0 998.0,545.6 999.0,546.4 1000.0,547.7 1001.0,542.9 1002.0,547.2 1003.0,546.8 1004.0,546.9 1005.0,546.3 1006.0,548.3 1007.0,548.5 1008.0,548.0 1009.0,548.3 1010.0,548.4 1011.0,547.8 1012.0,547.9 1013.0,548.3 1014.0,549.2 1015.0,548.1 1016.0,547.8 1017.0,549.5 1018.0,548.6 1019.0,549.0 1020.0,549.2 1021.0,549.5 1022.0,549.4 1023.0,548.7 1024.0,549.6 1025.0,550.2 1026.0,549.9 1027.0,550.5 1028.0,550.0 1029.0,550.6 1030.0,549.2 1031.0,547.8 1032.0,551.1 1033.0,550.7 1034.0,550.1 1035.0,548.3 1036.0,550.2 1037.0,550.3 1038.0,549.9 1039.0,551.2 1040.0,548.7 1041.0,551.5 1042.0,551.4 1043.0,550.5 1044.0,550.3 1045.0,551.6 1046.0,551.4 1047.0,552.2 1048.0,552.3 1049.0,551.7 1050.0,552.2 1051.0,552.0 1052.0,549.8 1053.0,551.5 1054.0,550.9 1055.0,552.6 1056.0,552.9 1057.0,550.6 1058.0,552.8 1059.0,553.5 1060.0,552.6 1061.0,552.6 1062.0,553.6 1063.0,553.6 1064.0,553.8 1065.0,552.6 1066.0,552.9 1067.0,553.4 1068.0,552.6 1069.0,551.3 1070.0,552.7 1071.0,551.8 1072.0,553.0 1073.0,553.9 1074.0,554.3 1075.0,554.3 1076.0,552.9 1077.0,553.8 1078.0,554.3 1079.0,554.6 1080.0,553.9 1081.0,554.6 1082.0,551.9 1083.0,554.7 1084.0,554.6 1085.0,554.3 1086.0,553.3 1087.0,554.6 1088.0,554.8 1089.0,553.3 1090.0,554.6 1091.0,554.8 1092.0,554.9 1093.0,550.8 1094.0,555.2 1095.0,555.4 1096.0,554.5 1097.0,555.1 1098.0,554.5 1099.0,555.5 1100.0,555.5 1101.0,554.9 1102.0,555.0 1103.0,554.5 1104.0,555.6 1105.0,555.5 1106.0,555.6 1107.0,554.8 1108.0,552.3 1109.0,555.1 1110.0,555.4 1111.0,555.7 1112.0,555.8 1113.0,555.3 1114.0,553.9 1115.0,555.5 1116.0,555.5 1117.0,554.9 1118.0,555.8 1119.0,553.4 1119.0,579.6 1118.0,571.0 1117.0,577.3 1116.0,570.7 1115.0,570.3 1114.0,585.0 1113.0,580.7 1112.0,570.4 1111.0,577.4 1110.0,572.0 1109.0,573.2 1108.0,571.7 1107.0,577.6 1106.0,570.8 1105.0,570.1 1104.0,572.6 1103.0,570.8 1102.0,572.1 1101.0,572.4 1100.0,574.6 1099.0,572.8 1098.0,577.8 1097.0,569.8 1096.0,570.8 1095.0,569.2 1094.0,571.4 1093.0,572.3 1092.0,573.7 1091.0,569.5 1090.0,569.6 1089.0,573.1 1088.0,575.8 1087.0,590.3 1086.0,570.7 1085.0,570.3 1084.0,569.2 1083.0,571.1 1082.0,574.7 1081.0,580.6 1080.0,569.5 1079.0,570.6 1078.0,572.4 1077.0,579.7 1076.0,570.6 1075.0,571.4 1074.0,571.3 1073.0,570.4 1072.0,570.2 1071.0,572.0 1070.0,570.3 1069.0,574.9 1068.0,569.4 1067.0,573.0 1066.0,575.9 1065.0,570.0 1064.0,568.2 1063.0,569.6 1062.0,576.0 1061.0,568.4 1060.0,589.2 1059.0,570.7 1058.0,568.6 1057.0,572.4 1056.0,568.1 1055.0,569.7 1054.0,575.5 1053.0,574.6 1052.0,567.6 1051.0,579.2 1050.0,571.3 1049.0,567.9 1048.0,570.5 1047.0,567.4 1046.0,567.7 1045.0,567.0 1044.0,566.8 1043.0,567.6 1042.0,572.4 1041.0,566.9 1040.0,569.2 1039.0,566.2 1038.0,569.6 1037.0,567.0 1036.0,570.9 1035.0,568.4 1034.0,571.0 1033.0,566.3 1032.0,567.2 1031.0,572.3 1030.0,572.3 1029.0,566.3 1028.0,568.2 1027.0,567.1 1026.0,578.6 1025.0,571.3 1024.0,565.8 1023.0,565.9 1022.0,566.7 1021.0,564.9 1020.0,565.5 1019.0,567.7 1018.0,565.9 1017.0,569.2 1016.0,575.9 1015.0,565.5 1014.0,566.0 1013.0,563.9 1012.0,565.3 1011.0,574.0 1010.0,565.0 1009.0,564.0 1008.0,564.2 1007.0,571.6 1006.0,568.1 1005.0,565.7 1004.0,569.5 1003.0,564.4 1002.0,564.1 1001.0,562.8 1000.0,569.6 999.0,564.8 998.0,573.6 997.0,564.2 996.0,562.7 995.0,562.7 994.0,563.9 993.0,562.2 992.0,571.5 991.0,567.9 990.0,561.7 989.0,561.9 988.0,563.0 987.0,566.0 986.0,561.3 985.0,565.2 984.0,566.0 983.0,562.4 982.0,561.4 981.0,561.5 980.0,561.8 979.0,563.7 978.0,561.2 977.0,560.6 976.0,560.3 975.0,568.2 974.0,560.9 973.0,566.7 972.0,563.5 971.0,561.9 970.0,565.4 969.0,563.2 968.0,567.3 967.0,561.8 966.0,565.2 965.0,562.6 964.0,562.5 963.0,560.3 962.0,562.3 961.0,565.0 960.0,563.9 959.0,558.9 958.0,559.6 957.0,560.0 956.0,562.5 955.0,562.8 954.0,576.9 953.0,563.1 952.0,560.2 951.0,561.4 950.0,560.5 949.0,562.5 948.0,558.1 947.0,566.5 946.0,558.5 945.0,559.4 944.0,560.5 943.0,558.9 942.0,574.4 941.0,559.1 940.0,558.2 939.0,566.6 938.0,568.3 937.0,567.5 936.0,560.3 935.0,564.1 934.0,557.4 933.0,561.3 932.0,559.5 931.0,557.2 930.0,568.8 929.0,556.7 928.0,556.9 927.0,558.0 926.0,556.7 925.0,559.4 924.0,561.0 923.0,560.2 922.0,557.6 921.0,558.5 920.0,557.4 919.0,560.3 918.0,563.6 917.0,556.9 916.0,556.9 915.0,557.7 914.0,558.1 913.0,558.4 912.0,558.4 911.0,558.8 910.0,557.2 909.0,557.0 908.0,559.5 907.0,555.4 906.0,556.8 905.0,560.7 904.0,556.5 903.0,556.3 902.0,563.1 901.0,554.6 900.0,557.8 899.0,554.8 898.0,555.8 897.0,567.3 896.0,554.4 895.0,554.7 894.0,559.0 893.0,557.1 892.0,573.0 891.0,554.4 890.0,559.5 889.0,561.1 888.0,554.0 887.0,557.6 886.0,559.5 885.0,554.5 884.0,553.3 883.0,559.6 882.0,556.3 881.0,554.9 880.0,552.9 879.0,554.6 878.0,559.8 877.0,560.0 876.0,559.3 875.0,555.7 874.0,553.1 873.0,555.8 872.0,551.9 871.0,555.6 870.0,551.8 869.0,553.4 868.0,560.1 867.0,560.4 866.0,555.0 865.0,554.2 864.0,554.1 863.0,561.5 862.0,551.1 861.0,559.0 860.0,551.8 859.0,554.1 858.0,550.8 857.0,553.9 856.0,551.4 855.0,549.9 854.0,550.8 853.0,557.2 852.0,555.1 851.0,549.5 850.0,553.8 849.0,554.1 848.0,552.3 847.0,554.8 846.0,549.3 845.0,550.3 844.0,550.0 843.0,551.4 842.0,558.4 841.0,549.6 840.0,547.8 839.0,549.6 838.0,557.6 837.0,551.0 836.0,547.2 835.0,547.3 834.0,549.1 833.0,547.2 832.0,550.7 831.0,549.0 830.0,548.1 829.0,546.4 828.0,547.6 827.0,547.0 826.0,548.8 825.0,551.8 824.0,545.2 823.0,545.0 822.0,545.4 821.0,545.9 820.0,552.9 819.0,544.3 818.0,544.2 817.0,555.2 816.0,544.1 815.0,546.9 814.0,543.9 813.0,543.0 812.0,544.9 811.0,548.0 810.0,542.8 809.0,547.3 808.0,544.4 807.0,542.3 806.0,542.0 805.0,541.7 804.0,541.6 803.0,543.7 802.0,541.4 801.0,543.4 800.0,544.2 799.0,552.6 798.0,540.2 797.0,540.3 796.0,540.4 795.0,543.1 794.0,541.0 793.0,541.6 792.0,541.1 791.0,538.6 790.0,538.3 789.0,540.7 788.0,539.4 787.0,539.8 786.0,542.6 785.0,539.5" fill="#a08c14"/><polygon points="785.0,502.2 786.0,504.5 787.0,505.0 788.0,504.4 789.0,505.5 790.0,504.0 791.0,505.9 792.0,500.3 793.0,506.1 794.0,503.2 795.0,507.3 796.0,505.8 797.0,507.0 798.0,506.9 799.0,506.8 800.0,506.8 801.0,508.4 802.0,508.9 803.0,506.5 804.0,505.9 805.0,506.0 806.0,508.8 807.0,507.9 808.0,507.6 809.0,507.7 810.0,509.8 811.0,505.1 812.0,508.3 813.0,509.3 814.0,506.5 815.0,510.3 816.0,510.9 817.0,504.8 818.0,510.6 819.0,506.8 820.0,504.2 821.0,512.5 822.0,512.0 823.0,513.2 824.0,512.5 825.0,512.4 826.0,512.4 827.0,513.1 828.0,512.8 829.0,514.2 830.0,511.7 831.0,510.5 832.0,513.3 833.0,514.3 834.0,514.0 835.0,513.5 836.0,512.6 837.0,510.4 838.0,513.2 839.0,512.5 840.0,515.8 841.0,515.9 842.0,509.6 843.0,508.5 844.0,513.0 845.0,516.8 846.0,516.4 847.0,516.4 848.0,516.7 849.0,512.9 850.0,517.3 851.0,516.9 852.0,517.3 853.0,516.4 854.0,516.9 855.0,516.2 856.0,518.1 857.0,517.0 858.0,518.9 859.0,517.1 860.0,517.0 861.0,517.8 862.0,519.4 863.0,516.4 864.0,519.1 865.0,519.1 866.0,510.3 867.0,515.5 868.0,520.0 869.0,519.6 870.0,517.7 871.0,520.4 872.0,519.9 873.0,520.5 874.0,519.9 875.0,519.3 876.0,520.0 877.0,520.2 878.0,519.3 879.0,521.1 880.0,520.6 881.0,518.8 882.0,520.0 883.0,521.0 884.0,519.9 885.0,521.2 886.0,521.8 887.0,522.2 888.0,521.5 889.0,521.3 890.0,520.3 891.0,521.3 892.0,522.5 893.0,520.4 894.0,521.2 895.0,519.2 896.0,520.7 897.0,522.1 898.0,523.2 899.0,513.8 900.0,521.7 901.0,523.4 902.0,520.3 903.0,521.8 904.0,523.9 905.0,523.6 906.0,523.5 907.0,523.9 908.0,523.0 909.0,522.9 910.0,523.4 911.0,523.3 912.0,524.4 913.0,516.4 914.0,523.3 915.0,520.8 916.0,524.0 917.0,521.3 918.0,525.0 919.0,520.8 920.0,524.8 921.0,525.0 922.0,516.6 923.0,521.4 924.0,522.1 925.0,523.0 926.0,524.4 927.0,520.1 928.0,525.1 929.0,521.0 930.0,525.9 931.0,524.0 932.0,524.6 933.0,516.3 934.0,521.8 935.0,519.9 936.0,518.7 937.0,526.3 938.0,526.0 939.0,524.4 940.0,526.0 941.0,521.6 942.0,525.5 943.0,523.7 944.0,526.9 945.0,520.1 946.0,526.1 947.0,527.0 948.0,525.1 949.0,526.5 950.0,526.6 951.0,523.9 952.0,528.0 953.0,524.9 954.0,525.5 955.0,526.9 956.0,526.7 957.0,526.8 958.0,521.9 959.0,527.1 960.0,528.2 961.0,528.3 962.0,528.8 963.0,528.8 964.0,526.7 965.0,528.6 966.0,524.9 967.0,527.1 968.0,528.3 969.0,528.5 970.0,529.0 971.0,525.5 972.0,527.5 973.0,524.3 974.0,522.6 975.0,529.4 976.0,527.1 977.0,529.7 978.0,529.1 979.0,524.6 980.0,530.0 981.0,530.7 982.0,529.5 983.0,529.7 984.0,530.8 985.0,530.8 986.0,530.5 987.0,525.7 988.0,530.6 989.0,529.7 990.0,528.6 991.0,530.2 992.0,528.0 993.0,528.2 994.0,529.3 995.0,531.8 996.0,531.4 997.0,529.3 998.0,530.2 999.0,532.6 1000.0,531.1 1001.0,527.2 1002.0,532.6 1003.0,531.9 1004.0,533.0 1005.0,532.8 1006.0,530.2 1007.0,527.1 1008.0,531.5 1009.0,528.9 1010.0,531.5 1011.0,532.6 1012.0,526.0 1013.0,526.8 1014.0,530.1 1015.0,532.4 1016.0,533.5 1017.0,534.5 1018.0,531.4 1019.0,529.7 1020.0,534.1 1021.0,534.5 1022.0,533.5 1023.0,533.7 1024.0,534.5 1025.0,534.1 1026.0,535.0 1027.0,535.2 1028.0,533.9 1029.0,535.7 1030.0,534.5 1031.0,534.4 1032.0,534.6 1033.0,533.4 1034.0,535.7 1035.0,535.8 1036.0,534.1 1037.0,536.1 1038.0,536.7 1039.0,535.6 1040.0,536.3 1041.0,535.2 1042.0,532.9 1043.0,534.3 1044.0,535.4 1045.0,532.7 1046.0,533.9 1047.0,537.5 1048.0,532.7 1049.0,536.6 1050.0,535.7 1051.0,537.8 1052.0,537.3 1053.0,535.6 1054.0,536.5 1055.0,534.4 1056.0,535.9 1057.0,536.3 1058.0,537.8 1059.0,538.3 1060.0,537.7 1061.0,536.7 1062.0,537.1 1063.0,533.7 1064.0,536.0 1065.0,538.1 1066.0,534.8 1067.0,538.6 1068.0,539.0 1069.0,537.9 1070.0,536.2 1071.0,539.3 1072.0,538.8 1073.0,537.5 1074.0,537.5 1075.0,539.3 1076.0,538.8 1077.0,538.0 1078.0,534.5 1079.0,538.9 1080.0,539.1 1081.0,539.3 1082.0,539.6 1083.0,537.2 1084.0,539.7 1085.0,538.3 1086.0,531.1 1087.0,538.6 1088.0,537.2 1089.0,539.4 1090.0,540.1 1091.0,539.7 1092.0,539.4 1093.0,538.6 1094.0,539.1 1095.0,534.9 1096.0,537.5 1097.0,535.9 1098.0,538.5 1099.0,539.8 1100.0,540.4 1101.0,538.3 1102.0,540.3 1103.0,538.5 1104.0,539.3 1105.0,540.6 1106.0,536.8 1107.0,540.7 1108.0,539.1 1109.0,527.7 1110.0,540.2 1111.0,537.2 1112.0,535.6 1113.0,540.0 1114.0,538.5 1115.0,538.7 1116.0,540.1 1117.0,540.5 1118.0,540.7 1119.0,538.6 1119.0,560.2 1118.0,557.2 1117.0,557.9 1116.0,557.5 1115.0,557.1 1114.0,557.2 1113.0,558.1 1112.0,558.8 1111.0,558.0 1110.0,558.8 1109.0,556.8 1108.0,558.8 1107.0,560.0 1106.0,557.7 1105.0,558.0 1104.0,556.9 1103.0,557.4 1102.0,558.5 1101.0,558.0 1100.0,557.2 1099.0,560.3 1098.0,558.6 1097.0,557.3 1096.0,560.2 1095.0,557.3 1094.0,557.4 1093.0,557.2 1092.0,556.7 1091.0,557.6 1090.0,557.0 1089.0,557.5 1088.0,557.3 1087.0,557.0 1086.0,556.5 1085.0,557.3 1084.0,556.3 1083.0,556.8 1082.0,556.1 1081.0,555.8 1080.0,556.7 1079.0,556.0 1078.0,557.4 1077.0,556.2 1076.0,556.9 1075.0,559.6 1074.0,555.5 1073.0,556.6 1072.0,556.3 1071.0,556.9 1070.0,556.8 1069.0,555.2 1068.0,559.2 1067.0,555.4 1066.0,558.6 1065.0,555.2 1064.0,557.3 1063.0,558.4 1062.0,554.7 1061.0,555.1 1060.0,554.8 1059.0,554.9 1058.0,554.7 1057.0,554.6 1056.0,554.5 1055.0,554.6 1054.0,555.2 1053.0,554.5 1052.0,554.4 1051.0,555.9 1050.0,555.2 1049.0,555.9 1048.0,555.0 1047.0,553.7 1046.0,554.4 1045.0,553.4 1044.0,553.6 1043.0,554.2 1042.0,554.1 1041.0,553.1 1040.0,553.2 1039.0,553.1 1038.0,555.3 1037.0,552.7 1036.0,553.5 1035.0,552.8 1034.0,553.0 1033.0,552.3 1032.0,552.8 1031.0,552.3 1030.0,556.8 1029.0,554.0 1028.0,552.7 1027.0,552.9 1026.0,551.7 1025.0,551.8 1024.0,552.7 1023.0,552.3 1022.0,551.3 1021.0,551.1 1020.0,552.5 1019.0,551.2 1018.0,552.0 1017.0,551.7 1016.0,551.8 1015.0,550.5 1014.0,550.4 1013.0,550.3 1012.0,551.4 1011.0,553.1 1010.0,551.9 1009.0,550.8 1008.0,552.4 1007.0,551.1 1006.0,550.1 1005.0,549.5 1004.0,549.4 1003.0,550.3 1002.0,550.1 1001.0,550.1 1000.0,549.8 999.0,549.8 998.0,551.2 997.0,548.6 996.0,549.2 995.0,550.0 994.0,548.3 993.0,549.2 992.0,549.8 991.0,548.1 990.0,548.8 989.0,548.4 988.0,547.8 987.0,547.9 986.0,547.9 985.0,548.4 984.0,547.2 983.0,547.8 982.0,547.5 981.0,548.4 980.0,549.0 979.0,546.8 978.0,547.4 977.0,547.2 976.0,546.9 975.0,547.3 974.0,546.3 973.0,547.0 972.0,546.5 971.0,547.2 970.0,545.9 969.0,546.2 968.0,547.4 967.0,546.8 966.0,545.5 965.0,545.6 964.0,546.3 963.0,549.6 962.0,545.3 961.0,544.9 960.0,546.0 959.0,548.4 958.0,545.2 957.0,545.6 956.0,544.5 955.0,547.4 954.0,545.5 953.0,544.2 952.0,545.4 951.0,544.1 950.0,544.3 949.0,544.5 948.0,544.8 947.0,544.7 946.0,544.6 945.0,544.1 944.0,544.2 943.0,544.1 942.0,545.4 941.0,543.2 940.0,543.1 939.0,543.4 938.0,542.9 937.0,543.4 936.0,543.4 935.0,544.9 934.0,543.1 933.0,543.1 932.0,542.7 931.0,543.0 930.0,543.1 929.0,542.9 928.0,543.2 927.0,542.1 926.0,542.0 925.0,542.1 924.0,542.3 923.0,543.8 922.0,541.6 921.0,543.0 920.0,543.8 919.0,541.2 918.0,542.2 917.0,543.4 916.0,541.1 915.0,541.5 914.0,541.9 913.0,540.9 912.0,543.4 911.0,540.8 910.0,547.4 909.0,541.1 908.0,540.9 907.0,543.1 906.0,541.0 905.0,540.9 904.0,543.0 903.0,540.7 902.0,539.8 901.0,539.7 900.0,539.9 899.0,540.1 898.0,540.3 897.0,539.4 896.0,539.4 895.0,539.6 894.0,539.7 893.0,539.0 892.0,539.5 891.0,539.4 890.0,540.7 889.0,538.8 888.0,540.3 887.0,538.8 886.0,539.8 885.0,538.6 884.0,538.3 883.0,540.4 882.0,538.2 881.0,538.4 880.0,538.2 879.0,537.6 878.0,538.6 877.0,537.6 876.0,537.2 875.0,537.3 874.0,537.3 873.0,537.4 872.0,539.3 871.0,536.8 870.0,540.9 869.0,537.8 868.0,537.3 867.0,536.1 866.0,540.2 865.0,537.5 864.0,536.0 863.0,535.9 862.0,538.0 861.0,535.8 860.0,535.7 859.0,535.1 858.0,536.0 857.0,535.8 856.0,535.9 855.0,535.5 854.0,535.9 853.0,535.1 852.0,534.9 851.0,535.7 850.0,535.0 849.0,539.7 848.0,536.5 847.0,533.8 846.0,533.5 845.0,534.2 844.0,534.9 843.0,532.9 842.0,533.2 841.0,532.5 840.0,532.6 839.0,533.0 838.0,532.0 837.0,533.3 836.0,532.1 835.0,532.7 834.0,531.6 833.0,531.5 832.0,531.4 831.0,531.0 830.0,531.5 829.0,532.5 828.0,531.4 827.0,530.8 826.0,530.1 825.0,531.6 824.0,530.0 823.0,530.0 822.0,529.4 821.0,529.2 820.0,529.1 819.0,528.5 818.0,528.6 817.0,528.8 816.0,528.2 815.0,528.1 814.0,528.5 813.0,527.5 812.0,527.4 811.0,529.4 810.0,527.2 809.0,528.6 808.0,526.3 807.0,526.1 806.0,526.8 805.0,526.1 804.0,526.1 803.0,526.5 802.0,525.3 801.0,528.0 800.0,524.6 799.0,524.4 798.0,524.1 797.0,523.9 796.0,523.9 795.0,525.3 794.0,524.1 793.0,526.2 792.0,522.9 791.0,523.5 790.0,522.6 789.0,525.3 788.0,521.7 787.0,521.7 786.0,521.7 785.0,521.2" fill="#c68e48"/><line x1="841.0" y1="516.4" x2="841.0" y2="478.2" stroke="#a88a30" stroke-width="1.0"/><line x1="1111.0" y1="540.8" x2="1111.0" y2="494.6" stroke="#a88a30" stroke-width="1.0"/><line x1="880.0" y1="521.6" x2="880.0" y2="486.6" stroke="#a88a30" stroke-width="1.0"/><line x1="791.0" y1="506.4" x2="791.0" y2="478.1" stroke="#a88a30" stroke-width="1.0"/><line x1="1100.0" y1="540.6" x2="1100.0" y2="517.7" stroke="#a88a30" stroke-width="1.0"/><line x1="993.0" y1="532.1" x2="993.0" y2="506.7" stroke="#a88a30" stroke-width="1.0"/><line x1="1118.0" y1="541.0" x2="1118.0" y2="528.4" stroke="#a88a30" stroke-width="1.0"/><line x1="1040.0" y1="536.9" x2="1040.0" y2="513.7" stroke="#a88a30" stroke-width="1.0"/><line x1="861.0" y1="519.4" x2="861.0" y2="459.8" stroke="#a88a30" stroke-width="1.0"/><line x1="1065.0" y1="538.9" x2="1065.0" y2="528.5" stroke="#a88a30" stroke-width="1.0"/><line x1="970.0" y1="529.7" x2="970.0" y2="481.9" stroke="#a88a30" stroke-width="1.0"/><line x1="938.0" y1="526.8" x2="938.0" y2="475.8" stroke="#a88a30" stroke-width="1.0"/><line x1="925.0" y1="525.7" x2="925.0" y2="494.7" stroke="#a88a30" stroke-width="1.0"/><line x1="1080.0" y1="539.8" x2="1080.0" y2="498.8" stroke="#a88a30" stroke-width="1.0"/><line x1="895.0" y1="523.1" x2="895.0" y2="501.6" stroke="#a88a30" stroke-width="1.0"/><line x1="1112.0" y1="540.9" x2="1112.0" y2="496.1" stroke="#a88a30" stroke-width="1.0"/><line x1="788.0" y1="505.7" x2="788.0" y2="458.9" stroke="#a88a30" stroke-width="1.0"/><line x1="800.0" y1="508.5" x2="800.0" y2="460.3" stroke="#a88a30" stroke-width="1.0"/><line x1="940.0" y1="527.0" x2="940.0" y2="491.4" stroke="#a88a30" stroke-width="1.0"/><line x1="1068.0" y1="539.1" x2="1068.0" y2="478.6" stroke="#a88a30" stroke-width="1.0"/><line x1="977.0" y1="530.4" x2="977.0" y2="475.4" stroke="#a88a30" stroke-width="1.0"/><line x1="900.0" y1="523.6" x2="900.0" y2="483.8" stroke="#a88a30" stroke-width="1.0"/><line x1="980.0" y1="560.7" x2="980.0" y2="564.8" stroke="#9c8812" stroke-width="1.0"/><line x1="847.0" y1="548.7" x2="847.0" y2="560.3" stroke="#9c8812" stroke-width="1.0"/><line x1="910.0" y1="555.2" x2="910.0" y2="564.3" stroke="#9c8812" stroke-width="1.0"/><line x1="1069.0" y1="568.2" x2="1069.0" y2="573.8" stroke="#9c8812" stroke-width="1.0"/><line x1="1000.0" y1="562.6" x2="1000.0" y2="576.2" stroke="#9c8812" stroke-width="1.0"/><line x1="817.0" y1="543.7" x2="817.0" y2="554.3" stroke="#9c8812" stroke-width="1.0"/><line x1="915.0" y1="555.5" x2="915.0" y2="562.2" stroke="#9c8812" stroke-width="1.0"/><line x1="1088.0" y1="569.0" x2="1088.0" y2="581.4" stroke="#9c8812" stroke-width="1.0"/><line x1="807.0" y1="541.8" x2="807.0" y2="549.0" stroke="#9c8812" stroke-width="1.0"/><line x1="994.0" y1="562.0" x2="994.0" y2="575.4" stroke="#9c8812" stroke-width="1.0"/><line x1="920.0" y1="555.9" x2="920.0" y2="562.2" stroke="#9c8812" stroke-width="1.0"/><line x1="1057.0" y1="567.5" x2="1057.0" y2="581.3" stroke="#9c8812" stroke-width="1.0"/><line x1="1015.0" y1="564.0" x2="1015.0" y2="567.7" stroke="#9c8812" stroke-width="1.0"/><line x1="905.0" y1="554.8" x2="905.0" y2="565.9" stroke="#9c8812" stroke-width="1.0"/><line x1="812.0" y1="542.8" x2="812.0" y2="549.0" stroke="#9c8812" stroke-width="1.0"/><line x1="867.0" y1="551.3" x2="867.0" y2="558.9" stroke="#9c8812" stroke-width="1.0"/><line x1="883.0" y1="552.9" x2="883.0" y2="562.9" stroke="#9c8812" stroke-width="1.0"/><line x1="950.0" y1="558.1" x2="950.0" y2="561.6" stroke="#9c8812" stroke-width="1.0"/><line x1="1022.0" y1="564.7" x2="1022.0" y2="570.1" stroke="#9c8812" stroke-width="1.0"/><line x1="1064.0" y1="567.9" x2="1064.0" y2="572.1" stroke="#9c8812" stroke-width="1.0"/><line x1="803.0" y1="541.0" x2="803.0" y2="552.1" stroke="#9c8812" stroke-width="1.0"/><line x1="1094.0" y1="569.1" x2="1094.0" y2="574.6" stroke="#9c8812" stroke-width="1.0"/><line x1="981.0" y1="560.8" x2="981.0" y2="569.3" stroke="#9c8812" stroke-width="1.0"/><line x1="925.0" y1="556.3" x2="925.0" y2="562.9" stroke="#9c8812" stroke-width="1.0"/><line x1="987.0" y1="561.4" x2="987.0" y2="567.0" stroke="#9c8812" stroke-width="1.0"/><line x1="931.0" y1="556.7" x2="931.0" y2="570.0" stroke="#9c8812" stroke-width="1.0"/><line x1="819.0" y1="544.1" x2="819.0" y2="552.7" stroke="#9c8812" stroke-width="1.0"/><line x1="1063.0" y1="567.9" x2="1063.0" y2="578.0" stroke="#9c8812" stroke-width="1.0"/><line x1="1112.0" y1="569.4" x2="1112.0" y2="580.2" stroke="#9c8812" stroke-width="1.0"/><line x1="806.0" y1="541.6" x2="806.0" y2="553.6" stroke="#9c8812" stroke-width="1.0"/><line x1="1028.0" y1="565.2" x2="1028.0" y2="571.1" stroke="#9c8812" stroke-width="1.0"/><line x1="873.0" y1="551.9" x2="873.0" y2="555.8" stroke="#9c8812" stroke-width="1.0"/><line x1="845.0" y1="548.4" x2="845.0" y2="556.6" stroke="#9c8812" stroke-width="1.0"/><line x1="943.0" y1="557.6" x2="943.0" y2="562.5" stroke="#9c8812" stroke-width="1.0"/><line x1="991.0" y1="561.7" x2="991.0" y2="565.0" stroke="#9c8812" stroke-width="1.0"/><line x1="860.0" y1="550.5" x2="860.0" y2="563.6" stroke="#9c8812" stroke-width="1.0"/><line x1="1116.0" y1="569.5" x2="1116.0" y2="579.4" stroke="#9c8812" stroke-width="1.0"/><line x1="896.0" y1="554.1" x2="896.0" y2="561.6" stroke="#9c8812" stroke-width="1.0"/><line x1="908.0" y1="555.0" x2="908.0" y2="559.5" stroke="#9c8812" stroke-width="1.0"/><line x1="1070.0" y1="568.2" x2="1070.0" y2="579.6" stroke="#9c8812" stroke-width="1.0"/><line x1="948.0" y1="557.7" x2="948.0" y2="575.6" stroke="#6a18a8" stroke-width="1.0"/><line x1="961.0" y1="558.9" x2="961.0" y2="573.3" stroke="#6a18a8" stroke-width="1.0"/><line x1="804.0" y1="539.4" x2="804.0" y2="551.0" stroke="#6a18a8" stroke-width="1.0"/><line x1="843.0" y1="546.8" x2="843.0" y2="562.6" stroke="#6a18a8" stroke-width="1.0"/><line x1="991.0" y1="561.9" x2="991.0" y2="571.7" stroke="#6a18a8" stroke-width="1.0"/><line x1="955.0" y1="558.3" x2="955.0" y2="573.7" stroke="#6a18a8" stroke-width="1.0"/><line x1="785" y1="383.2" x2="1119" y2="383.2" stroke="#7a7a7a" stroke-opacity="0.75" stroke-width="1.2"/><line x1="785" y1="503.0" x2="1119" y2="503.0" stroke="#7a7a7a" stroke-opacity="0.75" stroke-width="1.2"/><polyline points="785.0,521.8 787.0,521.7 789.0,520.8 791.0,523.8 793.0,523.9 795.0,522.8 797.0,524.6 799.0,523.5 801.0,525.8 803.0,524.9 805.0,524.8 807.0,525.6 809.0,525.7 811.0,527.0 813.0,527.4 815.0,527.7 817.0,527.5 819.0,524.8 821.0,529.0 823.0,527.4 825.0,529.9 827.0,531.1 829.0,530.7 831.0,530.3 833.0,530.9 835.0,531.3 837.0,531.2 839.0,531.5 841.0,531.5 843.0,534.0 845.0,533.1 847.0,534.3 849.0,533.4 851.0,534.1 853.0,534.1 855.0,535.0 857.0,535.7 859.0,535.3 861.0,534.7 863.0,534.9 865.0,537.5 867.0,535.9 869.0,536.1 871.0,538.1 873.0,537.9 875.0,537.6 877.0,536.9 879.0,539.9 881.0,538.1 883.0,538.5 885.0,538.0 887.0,536.9 889.0,537.2 891.0,539.2 893.0,539.3 895.0,538.9 897.0,538.1 899.0,538.1 901.0,539.3 903.0,538.4 905.0,540.9 907.0,541.4 909.0,543.2 911.0,541.4 913.0,540.1 915.0,540.0 917.0,537.6 919.0,540.6 921.0,541.2 923.0,542.5 925.0,542.3 927.0,542.5 929.0,542.3 931.0,542.9 933.0,543.8 935.0,541.5 937.0,542.3 939.0,541.5 941.0,544.7 943.0,544.5 945.0,544.2 947.0,542.4 949.0,543.9 951.0,543.7 953.0,544.2 955.0,544.1 957.0,545.0 959.0,544.3 961.0,545.7 963.0,545.3 965.0,545.0 967.0,545.3 969.0,545.2 971.0,546.7 973.0,545.8 975.0,546.5 977.0,546.0 979.0,545.2 981.0,547.8 983.0,546.0 985.0,547.9 987.0,547.9 989.0,546.0 991.0,546.9 993.0,547.6 995.0,547.5 997.0,547.3 999.0,549.5 1001.0,548.7 1003.0,549.5 1005.0,548.9 1007.0,549.9 1009.0,549.1 1011.0,550.0 1013.0,550.8 1015.0,550.5 1017.0,550.2 1019.0,549.8 1021.0,551.2 1023.0,551.6 1025.0,551.2 1027.0,550.9 1029.0,552.4 1031.0,554.5 1033.0,552.0 1035.0,552.8 1037.0,553.0 1039.0,550.3 1041.0,553.1 1043.0,552.5 1045.0,554.7 1047.0,553.3 1049.0,552.9 1051.0,553.7 1053.0,554.2 1055.0,553.6 1057.0,554.3 1059.0,553.1 1061.0,554.4 1063.0,555.5 1065.0,556.9 1067.0,555.7 1069.0,555.4 1071.0,556.5 1073.0,556.4 1075.0,557.2 1077.0,556.7 1079.0,555.6 1081.0,556.1 1083.0,556.1 1085.0,556.3 1087.0,556.3 1089.0,555.4 1091.0,554.2 1093.0,555.7 1095.0,554.4 1097.0,556.5 1099.0,556.5 1101.0,554.9 1103.0,557.3 1105.0,557.6 1107.0,556.9 1109.0,558.5 1111.0,558.7 1113.0,555.7 1115.0,558.0 1117.0,557.4 1119.0,557.4" fill="none" stroke="#ffe000" stroke-width="2.8"/></g><circle cx="865.2" cy="521.3" r="5.2" fill="#8a10e0" stroke="#3a2a4a" stroke-width="1"/><circle cx="865.2" cy="536.0" r="5.6" fill="#ffe000" stroke="#5a5030" stroke-width="1.2"/></svg>
<div class="t" style="left:761.5px;top:496.8px;font-size:13.0px;color:#8c8c8c;">0.1</div>
<div class="r" style="left:1198.0px;top:309.3px;width:333.0px;height:300.5px;background:#0b0b0b;border:1px solid #2e2e2e;border-radius:3px"></div>
<svg style="left:0;top:0" width="1920" height="1039"><clipPath id="cr"><rect x="1198" y="309.3" width="333" height="300.49999999999994"/></clipPath><g clip-path="url(#cr)"><line x1="1198" y1="330.8" x2="1531" y2="330.8" stroke="#3a3a3a" stroke-width="1"/><line x1="1198" y1="381.7" x2="1531" y2="381.7" stroke="#3a3a3a" stroke-width="1"/><line x1="1198" y1="432.0" x2="1531" y2="432.0" stroke="#3a3a3a" stroke-width="1"/><line x1="1198" y1="482.5" x2="1531" y2="482.5" stroke="#3a3a3a" stroke-width="1"/><line x1="1198" y1="532.7" x2="1531" y2="532.7" stroke="#3a3a3a" stroke-width="1"/><line x1="1198" y1="583.6" x2="1531" y2="583.6" stroke="#3a3a3a" stroke-width="1"/><line x1="1241.9" y1="309.3" x2="1241.9" y2="609.8" stroke="#3a3a3a" stroke-width="1"/><line x1="1271.8" y1="309.3" x2="1271.8" y2="609.8" stroke="#3a3a3a" stroke-width="1"/><line x1="1301.7" y1="309.3" x2="1301.7" y2="609.8" stroke="#3a3a3a" stroke-width="1"/><line x1="1331.6" y1="309.3" x2="1331.6" y2="609.8" stroke="#3a3a3a" stroke-width="1"/><line x1="1361.5" y1="309.3" x2="1361.5" y2="609.8" stroke="#3a3a3a" stroke-width="1"/><line x1="1391.4" y1="309.3" x2="1391.4" y2="609.8" stroke="#3a3a3a" stroke-width="1"/><line x1="1421.3" y1="309.3" x2="1421.3" y2="609.8" stroke="#3a3a3a" stroke-width="1"/><line x1="1451.2" y1="309.3" x2="1451.2" y2="609.8" stroke="#3a3a3a" stroke-width="1"/><line x1="1481.1" y1="309.3" x2="1481.1" y2="609.8" stroke="#3a3a3a" stroke-width="1"/><line x1="1212" y1="309.3" x2="1212" y2="609.8" stroke="#8a8a8a" stroke-width="1.3"/><line x1="1511" y1="309.3" x2="1511" y2="609.8" stroke="#8a8a8a" stroke-width="1.3"/><polygon points="1214.0,466.1 1215.0,472.1 1216.0,482.2 1217.0,487.2 1218.0,490.0 1219.0,492.4 1220.0,492.0 1221.0,491.9 1222.0,488.7 1223.0,493.1 1224.0,498.0 1225.0,498.2 1226.0,492.8 1227.0,496.8 1228.0,501.7 1229.0,498.4 1230.0,491.8 1231.0,501.6 1232.0,502.4 1233.0,502.9 1234.0,502.5 1235.0,500.0 1236.0,493.7 1237.0,504.5 1238.0,503.8 1239.0,504.9 1240.0,494.8 1241.0,502.2 1242.0,505.0 1243.0,502.8 1244.0,504.3 1245.0,506.0 1246.0,502.9 1247.0,506.4 1248.0,504.7 1249.0,506.9 1250.0,502.5 1251.0,492.4 1252.0,506.6 1253.0,505.5 1254.0,507.1 1255.0,507.6 1256.0,508.1 1257.0,504.6 1258.0,502.7 1259.0,500.4 1260.0,506.0 1261.0,501.3 1262.0,506.1 1263.0,503.1 1264.0,503.6 1265.0,509.6 1266.0,507.5 1267.0,506.4 1268.0,510.0 1269.0,508.3 1270.0,503.1 1271.0,503.2 1272.0,510.6 1273.0,501.4 1274.0,510.5 1275.0,510.9 1276.0,510.9 1277.0,508.3 1278.0,511.2 1279.0,499.1 1280.0,507.7 1281.0,510.8 1282.0,511.1 1283.0,512.0 1284.0,506.4 1285.0,510.7 1286.0,501.7 1287.0,511.7 1288.0,512.4 1289.0,505.0 1290.0,512.6 1291.0,511.6 1292.0,512.3 1293.0,508.9 1294.0,512.6 1295.0,511.6 1296.0,513.1 1297.0,504.0 1298.0,510.9 1299.0,512.2 1300.0,512.8 1301.0,511.7 1302.0,513.4 1303.0,511.0 1304.0,505.3 1305.0,508.3 1306.0,507.2 1307.0,510.3 1308.0,512.7 1309.0,510.9 1310.0,511.5 1311.0,513.2 1312.0,512.9 1313.0,513.2 1314.0,512.3 1315.0,514.0 1316.0,512.4 1317.0,513.4 1318.0,511.8 1319.0,513.0 1320.0,514.9 1321.0,509.5 1322.0,510.6 1323.0,514.7 1324.0,512.9 1325.0,507.7 1326.0,515.3 1327.0,514.8 1328.0,506.0 1329.0,498.3 1330.0,515.6 1331.0,512.2 1332.0,515.9 1333.0,514.5 1334.0,514.8 1335.0,515.7 1336.0,512.7 1337.0,510.4 1338.0,504.4 1339.0,515.8 1340.0,515.1 1341.0,516.1 1342.0,506.9 1343.0,514.8 1344.0,505.3 1345.0,507.6 1346.0,509.4 1347.0,516.1 1348.0,515.5 1349.0,512.6 1350.0,515.5 1351.0,515.6 1352.0,504.5 1353.0,516.1 1354.0,513.4 1355.0,516.7 1356.0,515.0 1357.0,513.9 1358.0,513.3 1359.0,514.8 1360.0,516.3 1361.0,516.6 1362.0,509.6 1363.0,517.2 1364.0,512.4 1365.0,516.2 1366.0,516.9 1367.0,508.0 1368.0,514.5 1369.0,516.6 1370.0,517.2 1371.0,515.6 1372.0,515.4 1373.0,514.9 1374.0,507.7 1375.0,516.6 1376.0,517.6 1377.0,514.2 1378.0,517.5 1379.0,513.1 1380.0,516.1 1381.0,509.3 1382.0,517.0 1383.0,512.6 1384.0,514.5 1385.0,515.7 1386.0,515.4 1387.0,508.9 1388.0,517.0 1389.0,517.5 1390.0,517.5 1391.0,509.1 1392.0,517.1 1393.0,512.4 1394.0,517.8 1395.0,517.9 1396.0,517.8 1397.0,515.5 1398.0,512.5 1399.0,514.4 1400.0,515.0 1401.0,517.4 1402.0,513.3 1403.0,517.5 1404.0,517.9 1405.0,513.7 1406.0,513.6 1407.0,512.6 1408.0,517.2 1409.0,502.1 1410.0,517.3 1411.0,515.7 1412.0,512.8 1413.0,517.6 1414.0,515.0 1415.0,517.5 1416.0,512.7 1417.0,515.5 1418.0,516.7 1419.0,504.9 1420.0,517.1 1421.0,516.7 1422.0,512.5 1423.0,514.4 1424.0,516.0 1425.0,516.4 1426.0,513.2 1427.0,514.4 1428.0,515.1 1429.0,511.0 1430.0,517.6 1431.0,516.4 1432.0,515.2 1433.0,505.8 1434.0,515.2 1435.0,514.2 1436.0,516.4 1437.0,518.4 1438.0,517.0 1439.0,518.2 1440.0,505.3 1441.0,517.7 1442.0,518.2 1443.0,517.6 1444.0,512.7 1445.0,516.6 1446.0,509.5 1447.0,516.9 1448.0,517.7 1449.0,517.6 1450.0,516.6 1451.0,517.5 1452.0,515.1 1453.0,518.6 1454.0,516.2 1455.0,511.1 1456.0,517.8 1457.0,517.9 1458.0,512.6 1459.0,518.0 1460.0,518.4 1461.0,514.1 1462.0,514.7 1463.0,503.4 1464.0,512.4 1465.0,517.4 1466.0,517.1 1467.0,514.9 1468.0,514.1 1469.0,515.9 1470.0,516.6 1471.0,515.8 1472.0,517.2 1473.0,517.5 1474.0,511.2 1475.0,514.0 1476.0,518.5 1477.0,518.0 1478.0,515.8 1479.0,518.4 1480.0,512.6 1481.0,514.9 1482.0,516.9 1483.0,517.3 1484.0,516.1 1485.0,515.8 1486.0,518.4 1487.0,518.1 1487.0,557.5 1486.0,554.2 1485.0,557.7 1484.0,552.0 1483.0,556.6 1482.0,553.7 1481.0,552.7 1480.0,555.5 1479.0,554.0 1478.0,555.2 1477.0,555.7 1476.0,552.3 1475.0,564.0 1474.0,554.7 1473.0,556.7 1472.0,559.8 1471.0,553.6 1470.0,561.2 1469.0,561.3 1468.0,568.4 1467.0,551.8 1466.0,557.7 1465.0,554.9 1464.0,553.3 1463.0,554.6 1462.0,554.4 1461.0,565.0 1460.0,553.4 1459.0,552.2 1458.0,554.4 1457.0,554.0 1456.0,564.6 1455.0,556.8 1454.0,552.3 1453.0,551.8 1452.0,551.7 1451.0,553.7 1450.0,552.1 1449.0,556.4 1448.0,552.1 1447.0,554.0 1446.0,556.9 1445.0,553.9 1444.0,553.5 1443.0,551.6 1442.0,552.3 1441.0,552.6 1440.0,553.3 1439.0,560.8 1438.0,566.8 1437.0,556.3 1436.0,555.4 1435.0,558.0 1434.0,556.3 1433.0,553.2 1432.0,553.2 1431.0,557.6 1430.0,554.5 1429.0,552.5 1428.0,553.8 1427.0,552.4 1426.0,553.2 1425.0,555.1 1424.0,555.5 1423.0,552.5 1422.0,558.0 1421.0,551.8 1420.0,555.0 1419.0,556.0 1418.0,555.6 1417.0,551.7 1416.0,552.1 1415.0,555.3 1414.0,555.1 1413.0,552.4 1412.0,552.2 1411.0,552.9 1410.0,557.4 1409.0,559.0 1408.0,561.9 1407.0,553.2 1406.0,553.8 1405.0,552.1 1404.0,556.6 1403.0,555.8 1402.0,553.0 1401.0,557.1 1400.0,551.1 1399.0,551.1 1398.0,554.2 1397.0,552.0 1396.0,562.6 1395.0,556.0 1394.0,552.4 1393.0,554.2 1392.0,554.7 1391.0,552.1 1390.0,553.2 1389.0,556.3 1388.0,554.4 1387.0,551.6 1386.0,555.4 1385.0,550.8 1384.0,553.8 1383.0,554.5 1382.0,564.4 1381.0,551.9 1380.0,554.0 1379.0,561.8 1378.0,555.9 1377.0,554.6 1376.0,553.4 1375.0,552.1 1374.0,555.1 1373.0,555.1 1372.0,554.5 1371.0,550.5 1370.0,562.7 1369.0,550.6 1368.0,553.4 1367.0,551.1 1366.0,550.3 1365.0,555.3 1364.0,551.3 1363.0,551.7 1362.0,552.0 1361.0,550.4 1360.0,551.2 1359.0,553.4 1358.0,552.9 1357.0,553.5 1356.0,556.5 1355.0,550.0 1354.0,552.3 1353.0,550.9 1352.0,554.2 1351.0,550.1 1350.0,551.2 1349.0,552.1 1348.0,550.7 1347.0,554.4 1346.0,550.0 1345.0,557.5 1344.0,552.5 1343.0,550.3 1342.0,551.7 1341.0,552.3 1340.0,555.2 1339.0,551.8 1338.0,550.4 1337.0,552.0 1336.0,553.1 1335.0,550.3 1334.0,549.2 1333.0,556.1 1332.0,550.3 1331.0,549.3 1330.0,550.4 1329.0,549.1 1328.0,552.7 1327.0,551.2 1326.0,556.6 1325.0,549.3 1324.0,553.0 1323.0,553.7 1322.0,554.0 1321.0,548.6 1320.0,552.1 1319.0,548.5 1318.0,553.3 1317.0,549.0 1316.0,551.4 1315.0,554.2 1314.0,562.4 1313.0,552.3 1312.0,548.0 1311.0,548.9 1310.0,550.8 1309.0,554.7 1308.0,549.5 1307.0,547.8 1306.0,551.0 1305.0,549.6 1304.0,554.2 1303.0,547.4 1302.0,561.5 1301.0,552.0 1300.0,555.8 1299.0,549.7 1298.0,547.8 1297.0,546.9 1296.0,548.8 1295.0,563.1 1294.0,547.0 1293.0,549.8 1292.0,549.0 1291.0,551.4 1290.0,552.0 1289.0,548.7 1288.0,547.8 1287.0,550.1 1286.0,547.8 1285.0,547.3 1284.0,556.9 1283.0,556.6 1282.0,546.2 1281.0,547.9 1280.0,545.4 1279.0,555.5 1278.0,545.5 1277.0,544.9 1276.0,553.4 1275.0,545.1 1274.0,546.6 1273.0,547.7 1272.0,544.3 1271.0,546.9 1270.0,544.6 1269.0,544.8 1268.0,553.7 1267.0,544.6 1266.0,549.3 1265.0,548.4 1264.0,553.6 1263.0,545.6 1262.0,543.6 1261.0,543.9 1260.0,543.3 1259.0,546.7 1258.0,545.8 1257.0,541.9 1256.0,542.0 1255.0,553.4 1254.0,543.8 1253.0,545.0 1252.0,544.6 1251.0,541.3 1250.0,543.7 1249.0,540.6 1248.0,540.0 1247.0,551.1 1246.0,546.2 1245.0,540.4 1244.0,543.4 1243.0,541.0 1242.0,538.9 1241.0,539.2 1240.0,540.2 1239.0,538.8 1238.0,537.9 1237.0,538.6 1236.0,539.2 1235.0,539.9 1234.0,538.0 1233.0,536.7 1232.0,538.3 1231.0,540.2 1230.0,537.3 1229.0,536.4 1228.0,536.6 1227.0,548.3 1226.0,537.0 1225.0,536.7 1224.0,534.8 1223.0,536.8 1222.0,541.6 1221.0,534.8 1220.0,529.0 1219.0,529.5 1218.0,526.4 1217.0,521.1 1216.0,528.9 1215.0,509.2 1214.0,501.8" fill="#6c10bc"/><line x1="1386.0" y1="517.8" x2="1386.0" y2="505.8" stroke="#6a14b0" stroke-width="1.0"/><line x1="1244.0" y1="506.1" x2="1244.0" y2="491.2" stroke="#6a14b0" stroke-width="1.0"/><line x1="1399.0" y1="518.0" x2="1399.0" y2="497.0" stroke="#6a14b0" stroke-width="1.0"/><line x1="1460.0" y1="518.6" x2="1460.0" y2="512.6" stroke="#6a14b0" stroke-width="1.0"/><line x1="1448.0" y1="518.6" x2="1448.0" y2="513.1" stroke="#6a14b0" stroke-width="1.0"/><line x1="1256.0" y1="508.4" x2="1256.0" y2="501.0" stroke="#6a14b0" stroke-width="1.0"/><line x1="1431.0" y1="518.4" x2="1431.0" y2="510.5" stroke="#6a14b0" stroke-width="1.0"/><line x1="1453.0" y1="518.6" x2="1453.0" y2="511.7" stroke="#6a14b0" stroke-width="1.0"/><line x1="1476.0" y1="518.7" x2="1476.0" y2="513.4" stroke="#6a14b0" stroke-width="1.0"/><line x1="1220.0" y1="495.6" x2="1220.0" y2="487.8" stroke="#6a14b0" stroke-width="1.0"/><line x1="1295.0" y1="513.5" x2="1295.0" y2="505.5" stroke="#6a14b0" stroke-width="1.0"/><line x1="1232.0" y1="503.2" x2="1232.0" y2="490.5" stroke="#6a14b0" stroke-width="1.0"/><line x1="1392.0" y1="517.9" x2="1392.0" y2="502.2" stroke="#6a14b0" stroke-width="1.0"/><line x1="1345.0" y1="516.6" x2="1345.0" y2="506.1" stroke="#6a14b0" stroke-width="1.0"/><line x1="1283.0" y1="512.3" x2="1283.0" y2="505.2" stroke="#6a14b0" stroke-width="1.0"/><line x1="1444.0" y1="518.5" x2="1444.0" y2="512.8" stroke="#6a14b0" stroke-width="1.0"/><line x1="1240.0" y1="505.2" x2="1240.0" y2="496.5" stroke="#6a14b0" stroke-width="1.0"/><line x1="1373.0" y1="517.5" x2="1373.0" y2="510.4" stroke="#6a14b0" stroke-width="1.0"/><line x1="1223.0" y1="499.2" x2="1223.0" y2="486.5" stroke="#6a14b0" stroke-width="1.0"/><line x1="1443.0" y1="518.5" x2="1443.0" y2="498.9" stroke="#6a14b0" stroke-width="1.0"/><line x1="1369.0" y1="517.4" x2="1369.0" y2="500.5" stroke="#6a14b0" stroke-width="1.0"/><line x1="1487.0" y1="518.8" x2="1487.0" y2="511.1" stroke="#6a14b0" stroke-width="1.0"/><line x1="1454.0" y1="518.6" x2="1454.0" y2="514.0" stroke="#6a14b0" stroke-width="1.0"/><line x1="1452.0" y1="518.6" x2="1452.0" y2="513.4" stroke="#6a14b0" stroke-width="1.0"/><line x1="1250.0" y1="507.3" x2="1250.0" y2="495.5" stroke="#6a14b0" stroke-width="1.0"/><line x1="1440.0" y1="518.5" x2="1440.0" y2="508.0" stroke="#6a14b0" stroke-width="1.0"/><line x1="1269.0" y1="510.5" x2="1269.0" y2="494.2" stroke="#6a14b0" stroke-width="1.0"/><line x1="1353.0" y1="516.9" x2="1353.0" y2="511.4" stroke="#6a14b0" stroke-width="1.0"/><line x1="1374.0" y1="517.5" x2="1374.0" y2="508.9" stroke="#6a14b0" stroke-width="1.0"/><line x1="1421.0" y1="518.3" x2="1421.0" y2="502.0" stroke="#6a14b0" stroke-width="1.0"/><line x1="1260.0" y1="509.1" x2="1260.0" y2="494.9" stroke="#6a14b0" stroke-width="1.0"/><line x1="1316.0" y1="515.1" x2="1316.0" y2="501.8" stroke="#6a14b0" stroke-width="1.0"/><line x1="1378.0" y1="517.6" x2="1378.0" y2="497.4" stroke="#6a14b0" stroke-width="1.0"/><line x1="1284.0" y1="512.4" x2="1284.0" y2="506.3" stroke="#6a14b0" stroke-width="1.0"/><line x1="1396.0" y1="518.0" x2="1396.0" y2="510.5" stroke="#6a14b0" stroke-width="1.0"/><line x1="1417.0" y1="518.3" x2="1417.0" y2="504.1" stroke="#6a14b0" stroke-width="1.0"/><line x1="1258.0" y1="508.8" x2="1258.0" y2="494.6" stroke="#6a14b0" stroke-width="1.0"/><line x1="1438.0" y1="518.5" x2="1438.0" y2="496.8" stroke="#6a14b0" stroke-width="1.0"/><line x1="1218.0" y1="491.0" x2="1218.0" y2="469.4" stroke="#6a14b0" stroke-width="1.0"/><line x1="1317.0" y1="515.2" x2="1317.0" y2="500.6" stroke="#6a14b0" stroke-width="1.0"/><line x1="1290.0" y1="546.0" x2="1290.0" y2="563.9" stroke="#6a14b0" stroke-width="1.0"/><line x1="1423.0" y1="551.3" x2="1423.0" y2="561.5" stroke="#6a14b0" stroke-width="1.0"/><line x1="1373.0" y1="550.5" x2="1373.0" y2="573.6" stroke="#6a14b0" stroke-width="1.0"/><line x1="1429.0" y1="551.4" x2="1429.0" y2="562.7" stroke="#6a14b0" stroke-width="1.0"/><line x1="1371.0" y1="550.4" x2="1371.0" y2="569.0" stroke="#6a14b0" stroke-width="1.0"/><line x1="1265.0" y1="542.9" x2="1265.0" y2="561.1" stroke="#6a14b0" stroke-width="1.0"/><line x1="1266.0" y1="543.1" x2="1266.0" y2="551.3" stroke="#6a14b0" stroke-width="1.0"/><line x1="1246.0" y1="539.5" x2="1246.0" y2="560.8" stroke="#6a14b0" stroke-width="1.0"/><line x1="1252.0" y1="540.7" x2="1252.0" y2="551.3" stroke="#6a14b0" stroke-width="1.0"/><line x1="1322.0" y1="548.5" x2="1322.0" y2="554.7" stroke="#6a14b0" stroke-width="1.0"/><line x1="1380.0" y1="550.7" x2="1380.0" y2="555.7" stroke="#6a14b0" stroke-width="1.0"/><line x1="1297.0" y1="546.7" x2="1297.0" y2="559.7" stroke="#6a14b0" stroke-width="1.0"/><line x1="1329.0" y1="548.9" x2="1329.0" y2="565.5" stroke="#6a14b0" stroke-width="1.0"/><line x1="1242.0" y1="538.7" x2="1242.0" y2="548.1" stroke="#6a14b0" stroke-width="1.0"/><line x1="1222.0" y1="531.2" x2="1222.0" y2="552.1" stroke="#6a14b0" stroke-width="1.0"/><line x1="1307.0" y1="547.5" x2="1307.0" y2="556.8" stroke="#6a14b0" stroke-width="1.0"/><line x1="1467.0" y1="551.7" x2="1467.0" y2="572.6" stroke="#6a14b0" stroke-width="1.0"/><line x1="1407.0" y1="551.1" x2="1407.0" y2="555.8" stroke="#6a14b0" stroke-width="1.0"/><line x1="1253.0" y1="540.9" x2="1253.0" y2="550.1" stroke="#6a14b0" stroke-width="1.0"/><line x1="1472.0" y1="551.7" x2="1472.0" y2="558.9" stroke="#6a14b0" stroke-width="1.0"/><line x1="1396.0" y1="551.0" x2="1396.0" y2="563.9" stroke="#6a14b0" stroke-width="1.0"/><line x1="1288.0" y1="545.8" x2="1288.0" y2="556.8" stroke="#6a14b0" stroke-width="1.0"/><line x1="1487.0" y1="551.8" x2="1487.0" y2="563.7" stroke="#6a14b0" stroke-width="1.0"/><line x1="1283.0" y1="545.3" x2="1283.0" y2="566.3" stroke="#6a14b0" stroke-width="1.0"/><line x1="1360.0" y1="550.1" x2="1360.0" y2="565.7" stroke="#6a14b0" stroke-width="1.0"/><line x1="1446.0" y1="551.6" x2="1446.0" y2="567.7" stroke="#6a14b0" stroke-width="1.0"/><line x1="1285.0" y1="545.5" x2="1285.0" y2="557.3" stroke="#6a14b0" stroke-width="1.0"/><line x1="1331.0" y1="549.0" x2="1331.0" y2="569.1" stroke="#6a14b0" stroke-width="1.0"/><line x1="1393.0" y1="550.9" x2="1393.0" y2="565.0" stroke="#6a14b0" stroke-width="1.0"/><line x1="1216.0" y1="515.6" x2="1216.0" y2="534.5" stroke="#6a14b0" stroke-width="1.0"/><line x1="1471.0" y1="551.7" x2="1471.0" y2="574.0" stroke="#6a14b0" stroke-width="1.0"/><line x1="1372.0" y1="550.5" x2="1372.0" y2="566.7" stroke="#6a14b0" stroke-width="1.0"/><line x1="1214.0" y1="499.9" x2="1214.0" y2="512.6" stroke="#6a14b0" stroke-width="1.0"/><line x1="1410.0" y1="551.2" x2="1410.0" y2="560.5" stroke="#6a14b0" stroke-width="1.0"/><line x1="1438.0" y1="551.5" x2="1438.0" y2="573.7" stroke="#6a14b0" stroke-width="1.0"/><line x1="1378.0" y1="550.6" x2="1378.0" y2="569.9" stroke="#6a14b0" stroke-width="1.0"/><line x1="1281.0" y1="545.0" x2="1281.0" y2="565.0" stroke="#6a14b0" stroke-width="1.0"/><line x1="1452.0" y1="551.6" x2="1452.0" y2="560.0" stroke="#6a14b0" stroke-width="1.0"/><line x1="1302.0" y1="547.1" x2="1302.0" y2="559.8" stroke="#6a14b0" stroke-width="1.0"/><line x1="1260.0" y1="542.1" x2="1260.0" y2="563.8" stroke="#6a14b0" stroke-width="1.0"/><polygon points="1214.0,467.1 1215.0,475.2 1216.0,483.1 1217.0,485.2 1218.0,491.9 1219.0,493.4 1220.0,493.3 1221.0,493.3 1222.0,495.7 1223.0,494.6 1224.0,498.0 1225.0,501.3 1226.0,501.9 1227.0,501.8 1228.0,500.0 1229.0,493.1 1230.0,501.7 1231.0,499.9 1232.0,503.6 1233.0,501.8 1234.0,503.2 1235.0,504.1 1236.0,504.4 1237.0,504.0 1238.0,505.1 1239.0,496.7 1240.0,504.3 1241.0,498.6 1242.0,504.8 1243.0,500.6 1244.0,499.3 1245.0,502.5 1246.0,504.4 1247.0,506.4 1248.0,507.8 1249.0,505.8 1250.0,507.3 1251.0,508.0 1252.0,508.0 1253.0,508.4 1254.0,503.5 1255.0,509.0 1256.0,506.1 1257.0,507.4 1258.0,508.8 1259.0,508.2 1260.0,506.7 1261.0,509.7 1262.0,510.0 1263.0,503.7 1264.0,510.0 1265.0,510.1 1266.0,506.1 1267.0,509.8 1268.0,510.7 1269.0,510.6 1270.0,508.5 1271.0,508.7 1272.0,511.5 1273.0,508.1 1274.0,505.7 1275.0,505.1 1276.0,512.3 1277.0,511.2 1278.0,507.7 1279.0,512.8 1280.0,511.3 1281.0,509.8 1282.0,512.3 1283.0,510.5 1284.0,510.2 1285.0,511.1 1286.0,511.1 1287.0,512.7 1288.0,506.5 1289.0,512.3 1290.0,513.1 1291.0,506.1 1292.0,513.5 1293.0,512.1 1294.0,503.4 1295.0,514.3 1296.0,512.8 1297.0,510.0 1298.0,507.5 1299.0,512.1 1300.0,514.3 1301.0,515.0 1302.0,510.9 1303.0,511.2 1304.0,512.5 1305.0,514.5 1306.0,513.2 1307.0,512.6 1308.0,515.0 1309.0,515.2 1310.0,512.2 1311.0,513.5 1312.0,514.7 1313.0,514.1 1314.0,513.5 1315.0,515.9 1316.0,511.4 1317.0,515.7 1318.0,513.0 1319.0,516.1 1320.0,516.0 1321.0,515.8 1322.0,514.6 1323.0,516.5 1324.0,515.5 1325.0,515.9 1326.0,514.7 1327.0,514.0 1328.0,511.4 1329.0,514.4 1330.0,512.5 1331.0,514.8 1332.0,512.6 1333.0,515.4 1334.0,514.0 1335.0,514.5 1336.0,513.6 1337.0,511.6 1338.0,512.0 1339.0,500.6 1340.0,517.0 1341.0,514.9 1342.0,515.0 1343.0,513.3 1344.0,513.1 1345.0,517.2 1346.0,511.0 1347.0,512.6 1348.0,515.2 1349.0,510.5 1350.0,517.4 1351.0,514.7 1352.0,513.1 1353.0,507.1 1354.0,517.8 1355.0,515.7 1356.0,514.8 1357.0,513.8 1358.0,516.9 1359.0,515.8 1360.0,517.0 1361.0,516.4 1362.0,516.5 1363.0,514.8 1364.0,516.4 1365.0,516.5 1366.0,518.0 1367.0,516.8 1368.0,518.3 1369.0,517.9 1370.0,517.5 1371.0,517.6 1372.0,517.8 1373.0,515.6 1374.0,517.1 1375.0,517.1 1376.0,516.4 1377.0,518.4 1378.0,518.2 1379.0,517.1 1380.0,515.9 1381.0,516.2 1382.0,516.1 1383.0,511.3 1384.0,518.3 1385.0,518.6 1386.0,514.0 1387.0,515.9 1388.0,518.7 1389.0,518.6 1390.0,517.4 1391.0,518.4 1392.0,514.3 1393.0,518.5 1394.0,518.9 1395.0,517.6 1396.0,511.6 1397.0,517.5 1398.0,518.1 1399.0,517.3 1400.0,518.3 1401.0,518.9 1402.0,516.2 1403.0,512.3 1404.0,517.5 1405.0,518.7 1406.0,518.1 1407.0,514.2 1408.0,518.2 1409.0,518.5 1410.0,517.8 1411.0,517.8 1412.0,512.2 1413.0,518.1 1414.0,517.3 1415.0,514.6 1416.0,518.1 1417.0,518.2 1418.0,513.8 1419.0,518.0 1420.0,515.6 1421.0,515.4 1422.0,516.7 1423.0,519.1 1424.0,517.6 1425.0,515.9 1426.0,515.0 1427.0,518.7 1428.0,510.8 1429.0,512.7 1430.0,514.8 1431.0,512.9 1432.0,515.1 1433.0,519.1 1434.0,515.1 1435.0,516.5 1436.0,515.2 1437.0,511.6 1438.0,514.8 1439.0,506.2 1440.0,519.1 1441.0,516.5 1442.0,519.5 1443.0,516.6 1444.0,514.9 1445.0,516.5 1446.0,518.2 1447.0,518.1 1448.0,510.9 1449.0,518.0 1450.0,519.4 1451.0,516.7 1452.0,518.2 1453.0,518.5 1454.0,517.2 1455.0,515.0 1456.0,519.4 1457.0,519.3 1458.0,506.7 1459.0,515.4 1460.0,514.2 1461.0,517.2 1462.0,518.3 1463.0,517.5 1464.0,517.1 1465.0,515.5 1466.0,518.4 1467.0,518.7 1468.0,516.0 1469.0,514.3 1470.0,513.2 1471.0,515.1 1472.0,513.8 1473.0,516.6 1474.0,519.3 1475.0,515.6 1476.0,519.3 1477.0,511.9 1478.0,519.6 1479.0,518.4 1480.0,516.0 1481.0,510.8 1482.0,514.2 1483.0,519.2 1484.0,516.0 1485.0,518.8 1486.0,517.8 1487.0,512.9 1487.0,555.1 1486.0,554.6 1485.0,554.1 1484.0,555.2 1483.0,554.4 1482.0,557.8 1481.0,555.4 1480.0,554.4 1479.0,553.8 1478.0,554.3 1477.0,555.5 1476.0,556.9 1475.0,557.1 1474.0,557.3 1473.0,555.9 1472.0,556.4 1471.0,554.2 1470.0,553.9 1469.0,557.4 1468.0,559.0 1467.0,557.5 1466.0,556.7 1465.0,557.9 1464.0,554.4 1463.0,554.4 1462.0,556.9 1461.0,554.9 1460.0,556.6 1459.0,554.1 1458.0,554.6 1457.0,556.4 1456.0,554.4 1455.0,554.0 1454.0,554.4 1453.0,554.5 1452.0,554.0 1451.0,553.7 1450.0,554.5 1449.0,554.3 1448.0,560.7 1447.0,555.6 1446.0,554.6 1445.0,556.2 1444.0,554.8 1443.0,553.7 1442.0,554.5 1441.0,553.7 1440.0,556.4 1439.0,554.3 1438.0,562.3 1437.0,555.7 1436.0,553.5 1435.0,555.0 1434.0,555.1 1433.0,553.9 1432.0,557.3 1431.0,556.0 1430.0,554.5 1429.0,556.9 1428.0,561.1 1427.0,553.5 1426.0,557.2 1425.0,555.1 1424.0,556.6 1423.0,554.3 1422.0,553.9 1421.0,555.2 1420.0,553.5 1419.0,556.1 1418.0,555.0 1417.0,560.5 1416.0,553.7 1415.0,557.1 1414.0,554.2 1413.0,555.3 1412.0,554.8 1411.0,556.3 1410.0,557.2 1409.0,559.8 1408.0,555.3 1407.0,553.3 1406.0,554.4 1405.0,554.0 1404.0,555.2 1403.0,555.6 1402.0,554.2 1401.0,553.6 1400.0,554.5 1399.0,554.8 1398.0,557.2 1397.0,553.0 1396.0,556.9 1395.0,554.8 1394.0,554.6 1393.0,553.3 1392.0,553.0 1391.0,553.2 1390.0,554.8 1389.0,554.7 1388.0,553.5 1387.0,557.0 1386.0,552.8 1385.0,555.4 1384.0,553.2 1383.0,556.3 1382.0,554.1 1381.0,555.8 1380.0,558.6 1379.0,553.8 1378.0,553.4 1377.0,553.6 1376.0,554.0 1375.0,553.7 1374.0,556.3 1373.0,557.0 1372.0,553.3 1371.0,565.5 1370.0,552.9 1369.0,555.1 1368.0,554.6 1367.0,553.1 1366.0,555.1 1365.0,552.6 1364.0,555.4 1363.0,559.7 1362.0,552.7 1361.0,558.4 1360.0,553.2 1359.0,553.0 1358.0,553.4 1357.0,553.4 1356.0,553.7 1355.0,553.8 1354.0,554.4 1353.0,551.9 1352.0,553.8 1351.0,554.5 1350.0,551.8 1349.0,564.7 1348.0,552.9 1347.0,551.9 1346.0,555.4 1345.0,553.5 1344.0,552.2 1343.0,554.1 1342.0,552.9 1341.0,552.3 1340.0,552.3 1339.0,552.1 1338.0,551.8 1337.0,558.9 1336.0,551.9 1335.0,554.6 1334.0,552.1 1333.0,552.7 1332.0,553.0 1331.0,564.0 1330.0,553.1 1329.0,553.7 1328.0,552.2 1327.0,551.8 1326.0,552.4 1325.0,552.0 1324.0,553.7 1323.0,551.4 1322.0,552.3 1321.0,552.0 1320.0,557.1 1319.0,553.1 1318.0,552.2 1317.0,550.5 1316.0,550.8 1315.0,552.8 1314.0,550.3 1313.0,555.8 1312.0,550.0 1311.0,550.1 1310.0,550.5 1309.0,552.1 1308.0,550.9 1307.0,555.1 1306.0,560.2 1305.0,549.6 1304.0,549.8 1303.0,550.7 1302.0,549.2 1301.0,549.1 1300.0,550.7 1299.0,551.5 1298.0,552.8 1297.0,549.0 1296.0,556.2 1295.0,548.5 1294.0,549.2 1293.0,549.4 1292.0,554.9 1291.0,552.0 1290.0,549.6 1289.0,550.1 1288.0,553.8 1287.0,549.4 1286.0,552.4 1285.0,548.7 1284.0,552.0 1283.0,549.4 1282.0,548.0 1281.0,547.5 1280.0,547.3 1279.0,551.4 1278.0,547.5 1277.0,548.8 1276.0,546.9 1275.0,551.4 1274.0,550.4 1273.0,547.8 1272.0,545.9 1271.0,547.0 1270.0,549.9 1269.0,549.2 1268.0,547.5 1267.0,545.9 1266.0,550.1 1265.0,545.0 1264.0,545.6 1263.0,547.0 1262.0,546.1 1261.0,545.2 1260.0,546.2 1259.0,545.2 1258.0,545.4 1257.0,544.8 1256.0,548.8 1255.0,552.7 1254.0,546.0 1253.0,543.3 1252.0,543.8 1251.0,543.4 1250.0,547.3 1249.0,543.4 1248.0,546.6 1247.0,543.5 1246.0,544.7 1245.0,541.9 1244.0,542.5 1243.0,542.2 1242.0,542.5 1241.0,541.1 1240.0,540.4 1239.0,542.1 1238.0,539.9 1237.0,540.5 1236.0,539.9 1235.0,541.5 1234.0,542.7 1233.0,539.8 1232.0,539.6 1231.0,538.1 1230.0,537.8 1229.0,537.5 1228.0,539.8 1227.0,540.9 1226.0,536.5 1225.0,538.2 1224.0,536.3 1223.0,534.6 1222.0,539.4 1221.0,532.5 1220.0,532.1 1219.0,530.7 1218.0,527.3 1217.0,529.6 1216.0,518.5 1215.0,512.1 1214.0,502.3" fill="#c68e48"/><line x1="1342.0" y1="517.5" x2="1342.0" y2="480.7" stroke="#a88a30" stroke-width="1.0"/><line x1="1406.0" y1="519.1" x2="1406.0" y2="500.0" stroke="#a88a30" stroke-width="1.0"/><line x1="1432.0" y1="519.4" x2="1432.0" y2="505.8" stroke="#a88a30" stroke-width="1.0"/><line x1="1487.0" y1="519.8" x2="1487.0" y2="477.8" stroke="#a88a30" stroke-width="1.0"/><line x1="1314.0" y1="516.0" x2="1314.0" y2="501.5" stroke="#a88a30" stroke-width="1.0"/><line x1="1279.0" y1="512.8" x2="1279.0" y2="478.1" stroke="#a88a30" stroke-width="1.0"/><line x1="1467.0" y1="519.7" x2="1467.0" y2="487.9" stroke="#a88a30" stroke-width="1.0"/><line x1="1227.0" y1="502.5" x2="1227.0" y2="455.4" stroke="#a88a30" stroke-width="1.0"/><line x1="1387.0" y1="518.8" x2="1387.0" y2="500.0" stroke="#a88a30" stroke-width="1.0"/><line x1="1277.0" y1="512.6" x2="1277.0" y2="468.6" stroke="#a88a30" stroke-width="1.0"/><line x1="1253.0" y1="508.9" x2="1253.0" y2="492.2" stroke="#a88a30" stroke-width="1.0"/><line x1="1340.0" y1="517.4" x2="1340.0" y2="499.2" stroke="#a88a30" stroke-width="1.0"/><line x1="1320.0" y1="516.4" x2="1320.0" y2="480.8" stroke="#a88a30" stroke-width="1.0"/><line x1="1304.0" y1="515.3" x2="1304.0" y2="497.3" stroke="#a88a30" stroke-width="1.0"/><line x1="1343.0" y1="517.5" x2="1343.0" y2="484.4" stroke="#a88a30" stroke-width="1.0"/><line x1="1359.0" y1="518.1" x2="1359.0" y2="481.8" stroke="#a88a30" stroke-width="1.0"/><line x1="1427.0" y1="519.4" x2="1427.0" y2="502.9" stroke="#a88a30" stroke-width="1.0"/><line x1="1374.0" y1="518.5" x2="1374.0" y2="478.1" stroke="#a88a30" stroke-width="1.0"/><line x1="1353.0" y1="517.9" x2="1353.0" y2="490.7" stroke="#a88a30" stroke-width="1.0"/><line x1="1483.0" y1="519.8" x2="1483.0" y2="472.9" stroke="#a88a30" stroke-width="1.0"/><line x1="1280.0" y1="546.9" x2="1280.0" y2="566.1" stroke="#9c8812" stroke-width="1.0"/><line x1="1318.0" y1="550.2" x2="1318.0" y2="558.4" stroke="#9c8812" stroke-width="1.0"/><line x1="1372.0" y1="552.5" x2="1372.0" y2="569.8" stroke="#9c8812" stroke-width="1.0"/><line x1="1486.0" y1="553.8" x2="1486.0" y2="565.1" stroke="#9c8812" stroke-width="1.0"/><line x1="1252.0" y1="542.7" x2="1252.0" y2="557.5" stroke="#9c8812" stroke-width="1.0"/><line x1="1482.0" y1="553.8" x2="1482.0" y2="568.2" stroke="#9c8812" stroke-width="1.0"/><line x1="1408.0" y1="553.2" x2="1408.0" y2="568.9" stroke="#9c8812" stroke-width="1.0"/><line x1="1346.0" y1="551.6" x2="1346.0" y2="562.7" stroke="#9c8812" stroke-width="1.0"/><line x1="1370.0" y1="552.4" x2="1370.0" y2="558.8" stroke="#9c8812" stroke-width="1.0"/><line x1="1391.0" y1="552.9" x2="1391.0" y2="569.8" stroke="#9c8812" stroke-width="1.0"/><line x1="1364.0" y1="552.3" x2="1364.0" y2="563.3" stroke="#9c8812" stroke-width="1.0"/><line x1="1478.0" y1="553.7" x2="1478.0" y2="564.8" stroke="#9c8812" stroke-width="1.0"/><line x1="1227.0" y1="536.5" x2="1227.0" y2="552.6" stroke="#9c8812" stroke-width="1.0"/><line x1="1421.0" y1="553.3" x2="1421.0" y2="568.3" stroke="#9c8812" stroke-width="1.0"/><line x1="1461.0" y1="553.7" x2="1461.0" y2="573.5" stroke="#9c8812" stroke-width="1.0"/><line x1="1270.0" y1="545.6" x2="1270.0" y2="555.8" stroke="#9c8812" stroke-width="1.0"/><line x1="1304.0" y1="549.3" x2="1304.0" y2="563.4" stroke="#9c8812" stroke-width="1.0"/><line x1="1233.0" y1="538.4" x2="1233.0" y2="543.8" stroke="#9c8812" stroke-width="1.0"/><line x1="1322.0" y1="550.5" x2="1322.0" y2="556.3" stroke="#9c8812" stroke-width="1.0"/><line x1="1216.0" y1="517.6" x2="1216.0" y2="525.7" stroke="#9c8812" stroke-width="1.0"/><line x1="1424.0" y1="553.4" x2="1424.0" y2="561.8" stroke="#9c8812" stroke-width="1.0"/><line x1="1366.0" y1="552.3" x2="1366.0" y2="563.4" stroke="#9c8812" stroke-width="1.0"/><line x1="1265.0" y1="544.9" x2="1265.0" y2="552.6" stroke="#9c8812" stroke-width="1.0"/><line x1="1416.0" y1="553.3" x2="1416.0" y2="572.2" stroke="#9c8812" stroke-width="1.0"/><line x1="1452.0" y1="553.6" x2="1452.0" y2="564.4" stroke="#9c8812" stroke-width="1.0"/><line x1="1240" y1="520" x2="1240" y2="385" stroke="#a08a20" stroke-width="1"/><line x1="1309" y1="512" x2="1309" y2="458" stroke="#a08a20" stroke-width="1"/><line x1="1313" y1="512" x2="1313" y2="460" stroke="#a08a20" stroke-width="1"/><polygon points="1488.0,511.6 1489.0,509.3 1490.0,510.4 1491.0,511.6 1492.0,514.1 1493.0,514.4 1494.0,512.9 1495.0,511.9 1496.0,511.5 1497.0,513.2 1498.0,508.0 1499.0,512.0 1500.0,512.2 1501.0,513.7 1502.0,513.7 1503.0,514.2 1504.0,512.2 1505.0,512.8 1506.0,508.9 1507.0,513.7 1508.0,511.6 1509.0,514.0 1510.0,513.9 1511.0,512.8 1512.0,510.1 1513.0,510.0 1514.0,513.6 1515.0,514.5 1516.0,504.2 1516.0,556.5 1515.0,556.0 1514.0,558.5 1513.0,555.2 1512.0,558.1 1511.0,556.3 1510.0,556.6 1509.0,559.4 1508.0,555.0 1507.0,555.3 1506.0,560.2 1505.0,557.4 1504.0,555.5 1503.0,557.5 1502.0,556.0 1501.0,565.3 1500.0,563.6 1499.0,555.2 1498.0,554.8 1497.0,554.9 1496.0,561.7 1495.0,558.6 1494.0,555.4 1493.0,562.4 1492.0,560.0 1491.0,557.9 1490.0,562.1 1489.0,556.5 1488.0,573.7" fill="#5c0c9c"/><line x1="1488" y1="535.5" x2="1516" y2="535.5" stroke="#a418ec" stroke-width="4.5"/><line x1="1212.5" y1="355.5" x2="1212.5" y2="379" stroke="#8a10e0" stroke-width="3"/><polyline points="1212.5,378 1213,430 1214,480 1214.0,484.9 1216.0,499.2 1218.0,508.0 1220.0,512.8 1222.0,517.0 1224.0,517.5 1226.0,518.8 1228.0,521.5 1230.0,520.2 1232.0,521.9 1234.0,520.4 1236.0,522.6 1238.0,522.9 1240.0,523.4 1242.0,523.1 1244.0,522.9 1246.0,524.2 1248.0,524.4 1250.0,526.6 1252.0,526.8 1254.0,524.6 1256.0,527.2 1258.0,526.2 1260.0,527.7 1262.0,526.9 1264.0,526.0 1266.0,529.3 1268.0,528.9 1270.0,527.2 1272.0,526.6 1274.0,528.5 1276.0,528.0 1278.0,529.2 1280.0,530.7 1282.0,531.9 1284.0,529.9 1286.0,532.2 1288.0,532.2 1290.0,530.5 1292.0,529.2 1294.0,532.4 1296.0,532.3 1298.0,534.6 1300.0,533.6 1302.0,533.0 1304.0,534.3 1306.0,531.2 1308.0,532.8 1310.0,532.4 1312.0,534.9 1314.0,533.7 1316.0,529.4 1318.0,534.9 1320.0,532.3 1322.0,534.4 1324.0,533.0 1326.0,534.0 1328.0,534.6 1330.0,534.2 1332.0,532.9 1334.0,535.8 1336.0,534.7 1338.0,534.3 1340.0,535.3 1342.0,533.9 1344.0,536.8 1346.0,534.9 1348.0,535.2 1350.0,535.2 1352.0,533.8 1354.0,533.5 1356.0,535.3 1358.0,535.5 1360.0,536.8 1362.0,535.8 1364.0,534.0 1366.0,536.0 1368.0,536.4 1370.0,536.6 1372.0,535.9 1374.0,534.1 1376.0,537.0 1378.0,534.8 1380.0,536.4 1382.0,533.8 1384.0,536.7 1386.0,534.9 1388.0,537.2 1390.0,538.0 1392.0,537.3 1394.0,534.6 1396.0,534.9 1398.0,535.0 1400.0,536.9 1402.0,536.5 1404.0,536.3 1406.0,536.5 1408.0,536.9 1410.0,537.0 1412.0,538.3 1414.0,536.2 1416.0,536.5 1418.0,534.1 1420.0,534.7 1422.0,535.5 1424.0,534.9 1426.0,536.7 1428.0,537.7 1430.0,535.9 1432.0,535.9 1434.0,535.9 1436.0,536.6 1438.0,535.8 1440.0,537.0 1442.0,536.9 1444.0,537.0 1446.0,537.5 1448.0,536.6 1450.0,536.8 1452.0,538.7 1454.0,536.6 1456.0,537.6 1458.0,536.7 1460.0,536.1 1462.0,536.1 1464.0,535.7 1466.0,536.7 1468.0,536.0 1470.0,536.2 1472.0,538.2 1474.0,536.6 1476.0,538.1 1478.0,537.1 1480.0,537.8 1482.0,536.0 1484.0,536.9 1486.0,539.9" fill="none" stroke="#ffe000" stroke-width="3.6"/></g></svg>
<div class="t" style="left:1174.8px;top:324.6px;font-size:12.95px;color:#8c8c8c;">0.8</div>
<div class="t" style="left:1174.8px;top:375.3px;font-size:12.95px;color:#8c8c8c;">0.7</div>
<div class="t" style="left:1174.8px;top:425.6px;font-size:12.95px;color:#8c8c8c;">0.6</div>
<div class="t" style="left:1174.8px;top:476.1px;font-size:12.95px;color:#8c8c8c;">0.5</div>
<div class="t" style="left:1174.8px;top:526.3px;font-size:12.95px;color:#8c8c8c;">0.4</div>
<div class="t" style="left:1174.8px;top:577.2px;font-size:12.95px;color:#8c8c8c;">0.3</div>
<div class="t" style="left:1207.8px;top:612.9px;font-size:13.75px;color:#8c8c8c;">0</div>
<div class="t" style="left:1481.0px;top:612.9px;font-size:13.75px;color:#8c8c8c;">10000000</div>
<div class="r" style="left:875.7px;top:394.5px;width:295.9px;height:75.4px;background:#1c1c1c;border:1px solid #383838;border-radius:6px;box-shadow:0 0 8px rgba(0,0,0,0.5)"></div>
<div class="r" style="left:880.0px;top:423.0px;width:287.0px;height:20.3px;background:#202020;"></div>
<div class="t" style="left:1033.9px;top:404.3px;font-size:13.6px;color:#7a7a7a;">x</div>
<div class="t" style="left:1122.7px;top:404.3px;font-size:13.6px;color:#7a7a7a;">y</div>
<div class="t" style="left:883.7px;top:426.0px;font-size:13.72px;color:#922ae0;">train/loss (QUI-110985)</div>
<div class="t" style="left:1033.9px;top:426.0px;font-size:13.68px;color:#8c8c8c;">4198400.000</div>
<div class="t" style="left:1122.7px;top:426.3px;font-size:13.32px;color:#8c8c8c;">0.091</div>
<div class="t" style="left:883.7px;top:447.0px;font-size:13.72px;color:#e8d020;">train/loss (QUI-110986)</div>
<div class="t" style="left:1033.9px;top:447.0px;font-size:13.68px;color:#8c8c8c;">4191744.000</div>
<div class="t" style="left:1122.7px;top:447.3px;font-size:13.32px;color:#8c8c8c;">0.084</div>
<div class="r" style="left:1562.5px;top:255.0px;width:3.0px;height:177.5px;background:#555555;border-radius:2px"></div>
<div class="r" style="left:331.0px;top:633.0px;width:1241.0px;height:2.0px;background:#2a2a2a;"></div>
<div class="t" style="left:342.5px;top:639.0px;font-size:13.48px;color:#c0c0c0;">Comparison A (6)</div>
<div class="r" style="left:459.5px;top:638.1px;width:22.7px;height:15.4px;background:#3c3c3c;border-radius:2px"></div>
<svg style="left:465.9px;top:640.8px" width="10" height="10" viewBox="0 0 10 10"><path d="M1.3,1.3 L8.7,8.7 M8.7,1.3 L1.3,8.7" stroke="#d0d0d0" stroke-width="2"/></svg>
<div class="r" style="left:494.0px;top:637.0px;width:1.0px;height:19.0px;background:#303030;"></div>
<div class="r" style="left:505.4px;top:636.2px;width:113.1px;height:18.7px;background:#0a5a82;border-radius:3px"></div>
<div class="t" style="left:510.2px;top:639.0px;font-size:13.48px;color:#9ad0f0;">Comparison B (4)</div>
<div class="r" style="left:626.8px;top:638.1px;width:23.2px;height:15.4px;background:#3c3c3c;border-radius:2px"></div>
<svg style="left:633.4px;top:640.8px" width="10" height="10" viewBox="0 0 10 10"><path d="M1.3,1.3 L8.7,8.7 M8.7,1.3 L1.3,8.7" stroke="#d0d0d0" stroke-width="2"/></svg>
<div class="r" style="left:661.0px;top:637.0px;width:1.0px;height:19.0px;background:#303030;"></div>
<div class="r" style="left:673.0px;top:637.5px;width:16.4px;height:16.5px;background:#333333;border-radius:2px"></div>
<svg style="left:676px;top:640.5px" width="10" height="10" viewBox="0 0 10 10"><path d="M5,1 V9 M1,5 H9" stroke="#a8a8a8" stroke-width="1.3"/></svg>
<div class="t" style="left:338.7px;top:666.8px;font-size:12.5px;color:#4a6ee0;">BASELINE</div>
<div style="position:absolute;left:331px;top:0;width:1235.5px;height:1039px;overflow:hidden">
<div class="t" style="left:58.4px;top:690.2px;font-size:13.6px;color:#d6d6d6;">ID</div>
<div class="t" style="left:166.3px;top:689.9px;font-size:13.9px;color:#d6d6d6;">State</div>
<div class="t" style="left:216.8px;top:690.2px;font-size:13.6px;color:#d6d6d6;">Owner</div>
<div class="t" style="left:281.9px;top:690.2px;font-size:13.6px;color:#d6d6d6;">Created</div>
<div class="t" style="left:365.8px;top:690.3px;font-size:13.47px;color:#d6d6d6;">seed</div>
<div class="t" style="left:424.1px;top:690.2px;font-size:13.6px;color:#d6d6d6;">aux_loss_weight</div>
<div class="t" style="left:533.5px;top:690.2px;font-size:13.56px;color:#d6d6d6;">backbone</div>
<div class="t" style="left:601.3px;top:690.4px;font-size:13.4px;color:#d6d6d6;">batch_size</div>
<div class="t" style="left:673.0px;top:690.4px;font-size:13.3px;color:#d6d6d6;">batch_size_val</div>
<div class="t" style="left:769.0px;top:690.0px;font-size:13.79px;color:#d6d6d6;">bwd_loss_weight</div>
<div class="t" style="left:883.3px;top:690.1px;font-size:13.74px;color:#d6d6d6;">calc_metric</div>
<div class="t" style="left:961.3px;top:690.0px;font-size:13.86px;color:#d6d6d6;">ce_ignore_index</div>
<div class="t" style="left:1070.0px;top:690.0px;font-size:13.8px;color:#d6d6d6;">clip_grad</div>
<div class="t" style="left:1140.0px;top:689.7px;font-size:14.2px;color:#d6d6d6;">data_folder</div>
<div class="r" style="left:7.0px;top:708.7px;width:1228.7px;height:36.0px;background:#202020;"></div>
<div class="r" style="left:7.3px;top:719.7px;width:22.4px;height:15.1px;background:#3c3c3c;border-radius:2px"></div>
<svg style="left:13.5px;top:722.2px" width="10" height="10" viewBox="0 0 10 10"><path d="M1.3,1.3 L8.7,8.7 M8.7,1.3 L1.3,8.7" stroke="#d0d0d0" stroke-width="2"/></svg>
<div class="r" style="left:57.9px;top:717.9px;width:97.4px;height:19.0px;background:#540e9c;border-radius:2px"></div>
<svg style="left:61.9px;top:721.1px" width="13" height="13" viewBox="0 0 13 13"><path d="M6.5,0.5 V12.5 M0.5,6.5 H12.5" stroke="#a026ee" stroke-width="3"/></svg>
<div class="t" style="left:78.2px;top:720.7px;font-size:13.55px;color:#a026ee;">QUI-110985</div>
<div class="t" style="left:165.7px;top:720.5px;font-size:13.8px;color:#8c8c8c;">idle</div>
<div class="t" style="left:216.8px;top:720.7px;font-size:13.6px;color:#8c8c8c;">neptuner</div>
<div class="t" style="left:281.9px;top:720.9px;font-size:13.35px;color:#8c8c8c;">4 weeks ago</div>
<div class="t" style="left:365.8px;top:719.7px;font-size:14.8px;color:#e8a03c;">506703</div>
<div class="t" style="left:424.1px;top:719.8px;font-size:14.7px;color:#8c8c8c;">0.020000</div>
<div class="t" style="left:601.3px;top:720.0px;font-size:14.45px;color:#8c8c8c;">256</div>
<div class="t" style="left:673.0px;top:720.0px;font-size:14.45px;color:#8c8c8c;">128</div>
<div class="t" style="left:769.0px;top:719.8px;font-size:14.7px;color:#8c8c8c;">0.400000</div>
<div class="t" style="left:883.3px;top:720.5px;font-size:13.8px;color:#8c8c8c;">true</div>
<div class="t" style="left:961.3px;top:720.2px;font-size:14.2px;color:#8c8c8c;">-100</div>
<div class="t" style="left:1070.0px;top:719.8px;font-size:14.7px;color:#8c8c8c;">4.000000</div>
<div class="t" style="left:1140.0px;top:719.2px;font-size:15.4px;color:#8c8c8c;">datamount/tra</div>
<div class="r" style="left:7.3px;top:758.1px;width:22.4px;height:15.1px;background:#3c3c3c;border-radius:2px"></div>
<svg style="left:13.5px;top:760.7px" width="10" height="10" viewBox="0 0 10 10"><path d="M1.3,1.3 L8.7,8.7 M8.7,1.3 L1.3,8.7" stroke="#d0d0d0" stroke-width="2"/></svg>
<div class="r" style="left:58.9px;top:756.3px;width:97.4px;height:19.0px;background:#251838;border-radius:2px"></div>
<svg style="left:62.9px;top:759.5px" width="14" height="13" viewBox="0 0 14 13"><path d="M1,6.5 H13" stroke="#4e2e80" stroke-width="1.8"/></svg>
<div class="t" style="left:80.7px;top:759.1px;font-size:13.55px;color:#4e2e80;">QUI-110987</div>
<div class="t" style="left:165.7px;top:758.9px;font-size:13.8px;color:#8c8c8c;">idle</div>
<div class="t" style="left:216.8px;top:759.1px;font-size:13.6px;color:#8c8c8c;">neptuner</div>
<div class="t" style="left:281.9px;top:759.3px;font-size:13.35px;color:#8c8c8c;">3 weeks ago</div>
<div class="t" style="left:365.8px;top:758.1px;font-size:14.8px;color:#e8a03c;">151572</div>
<div class="t" style="left:424.1px;top:758.2px;font-size:14.7px;color:#8c8c8c;">0.020000</div>
<div class="t" style="left:601.3px;top:758.4px;font-size:14.45px;color:#8c8c8c;">256</div>
<div class="t" style="left:673.0px;top:758.4px;font-size:14.45px;color:#8c8c8c;">128</div>
<div class="t" style="left:769.0px;top:758.2px;font-size:14.7px;color:#8c8c8c;">0.400000</div>
<div class="t" style="left:883.3px;top:758.9px;font-size:13.8px;color:#8c8c8c;">true</div>
<div class="t" style="left:961.3px;top:758.6px;font-size:14.2px;color:#8c8c8c;">-100</div>
<div class="t" style="left:1070.0px;top:758.2px;font-size:14.7px;color:#8c8c8c;">4.000000</div>
<div class="t" style="left:1140.0px;top:757.6px;font-size:15.4px;color:#8c8c8c;">datamount/tra</div>
</div>
<div class="r" style="left:338.0px;top:802.2px;width:1228.7px;height:1.0px;background:#2a2a2a;"></div>
<div class="t" style="left:338.7px;top:805.8px;font-size:12.85px;color:#e89a1a;">CANDIDATE</div>
<div style="position:absolute;left:331px;top:0;width:1235.5px;height:1039px;overflow:hidden">
<div class="t" style="left:58.4px;top:830.2px;font-size:13.6px;color:#d6d6d6;">ID</div>
<div class="t" style="left:166.3px;top:829.9px;font-size:13.9px;color:#d6d6d6;">State</div>
<div class="t" style="left:216.8px;top:830.2px;font-size:13.6px;color:#d6d6d6;">Owner</div>
<div class="t" style="left:281.9px;top:830.2px;font-size:13.6px;color:#d6d6d6;">Created</div>
<div class="t" style="left:365.8px;top:830.3px;font-size:13.47px;color:#d6d6d6;">seed</div>
<div class="t" style="left:424.1px;top:830.2px;font-size:13.6px;color:#d6d6d6;">aux_loss_weight</div>
<div class="t" style="left:533.5px;top:830.2px;font-size:13.56px;color:#d6d6d6;">backbone</div>
<div class="t" style="left:601.3px;top:830.4px;font-size:13.4px;color:#d6d6d6;">batch_size</div>
<div class="t" style="left:673.0px;top:830.4px;font-size:13.3px;color:#d6d6d6;">batch_size_val</div>
<div class="t" style="left:769.0px;top:830.0px;font-size:13.79px;color:#d6d6d6;">bwd_loss_weight</div>
<div class="t" style="left:883.3px;top:830.1px;font-size:13.74px;color:#d6d6d6;">calc_metric</div>
<div class="t" style="left:961.3px;top:830.0px;font-size:13.86px;color:#d6d6d6;">ce_ignore_index</div>
<div class="t" style="left:1070.0px;top:830.0px;font-size:13.8px;color:#d6d6d6;">clip_grad</div>
<div class="t" style="left:1140.0px;top:829.7px;font-size:14.2px;color:#d6d6d6;">data_folder</div>
<div class="r" style="left:7.0px;top:848.1px;width:1228.7px;height:36.0px;background:#202020;"></div>
<div class="r" style="left:7.3px;top:859.1px;width:22.4px;height:15.1px;background:#3c3c3c;border-radius:2px"></div>
<svg style="left:13.5px;top:861.7px" width="10" height="10" viewBox="0 0 10 10"><path d="M1.3,1.3 L8.7,8.7 M8.7,1.3 L1.3,8.7" stroke="#d0d0d0" stroke-width="2"/></svg>
<div class="r" style="left:58.9px;top:857.3px;width:97.4px;height:19.0px;background:#302e10;border-radius:2px"></div>
<svg style="left:62.9px;top:860.5px" width="14" height="13" viewBox="0 0 14 13"><path d="M1,6.5 H13" stroke="#7e7420" stroke-width="1.8"/></svg>
<div class="t" style="left:80.7px;top:860.1px;font-size:13.55px;color:#7e7420;">QUI-110983</div>
<div class="t" style="left:165.7px;top:859.9px;font-size:13.8px;color:#8c8c8c;">idle</div>
<div class="t" style="left:216.8px;top:860.1px;font-size:13.6px;color:#8c8c8c;">neptuner</div>
<div class="t" style="left:281.9px;top:860.3px;font-size:13.35px;color:#8c8c8c;">4 weeks ago</div>
<div class="t" style="left:365.8px;top:859.1px;font-size:14.8px;color:#e8a03c;">64854</div>
<div class="t" style="left:424.1px;top:859.2px;font-size:14.7px;color:#8c8c8c;">0.020000</div>
<div class="t" style="left:601.3px;top:859.4px;font-size:14.45px;color:#8c8c8c;">256</div>
<div class="t" style="left:673.0px;top:859.4px;font-size:14.45px;color:#8c8c8c;">128</div>
<div class="t" style="left:769.0px;top:859.2px;font-size:14.7px;color:#8c8c8c;">0.400000</div>
<div class="t" style="left:883.3px;top:859.9px;font-size:13.8px;color:#8c8c8c;">true</div>
<div class="t" style="left:961.3px;top:859.6px;font-size:14.2px;color:#8c8c8c;">-100</div>
<div class="t" style="left:1070.0px;top:859.2px;font-size:14.7px;color:#8c8c8c;">4.000000</div>
<div class="t" style="left:1140.0px;top:858.6px;font-size:15.4px;color:#8c8c8c;">datamount/tra</div>
<div class="r" style="left:7.3px;top:896.7px;width:22.4px;height:15.1px;background:#3c3c3c;border-radius:2px"></div>
<svg style="left:13.5px;top:899.2px" width="10" height="10" viewBox="0 0 10 10"><path d="M1.3,1.3 L8.7,8.7 M8.7,1.3 L1.3,8.7" stroke="#d0d0d0" stroke-width="2"/></svg>
<div class="r" style="left:57.9px;top:894.9px;width:97.4px;height:19.0px;background:#6a5e08;border-radius:2px"></div>
<svg style="left:61.9px;top:898.1px" width="13" height="13" viewBox="0 0 13 13"><path d="M6.5,0.5 V12.5 M0.5,6.5 H12.5" stroke="#ffe31a" stroke-width="3"/></svg>
<div class="t" style="left:78.2px;top:897.7px;font-size:13.55px;color:#ffe31a;">QUI-110986</div>
<div class="t" style="left:165.7px;top:897.5px;font-size:13.8px;color:#8c8c8c;">idle</div>
<div class="t" style="left:216.8px;top:897.7px;font-size:13.6px;color:#8c8c8c;">neptuner</div>
<div class="t" style="left:281.9px;top:897.9px;font-size:13.35px;color:#8c8c8c;">4 weeks ago</div>
<div class="t" style="left:365.8px;top:896.7px;font-size:14.8px;color:#e8a03c;">551900</div>
<div class="t" style="left:424.1px;top:896.8px;font-size:14.7px;color:#8c8c8c;">0.020000</div>
<div class="t" style="left:601.3px;top:897.0px;font-size:14.45px;color:#8c8c8c;">256</div>
<div class="t" style="left:673.0px;top:897.0px;font-size:14.45px;color:#8c8c8c;">128</div>
<div class="t" style="left:769.0px;top:896.8px;font-size:14.7px;color:#8c8c8c;">0.400000</div>
<div class="t" style="left:883.3px;top:897.5px;font-size:13.8px;color:#8c8c8c;">true</div>
<div class="t" style="left:961.3px;top:897.2px;font-size:14.2px;color:#8c8c8c;">-100</div>
<div class="t" style="left:1070.0px;top:896.8px;font-size:14.7px;color:#8c8c8c;">4.000000</div>
<div class="t" style="left:1140.0px;top:896.2px;font-size:15.4px;color:#8c8c8c;">datamount/tra</div>
</div>
<div class="r" style="left:331.0px;top:943.3px;width:1241.0px;height:1.0px;background:#303030;"></div>
<div class="r" style="left:331.0px;top:944.3px;width:1241.0px;height:22.7px;background:#1b1b1b;"></div>
<div class="t" style="left:742.6px;top:948.3px;font-size:14.18px;color:#d0d0d0;">common/quickstarts</div>
<svg style="left:877px;top:950px" width="12" height="10" viewBox="0 0 12 10"><path d="M1,5 L4.5,8.5 L11,1.5" fill="none" stroke="#a0a0a0" stroke-width="1.5"/></svg>
<div class="r" style="left:901.2px;top:947.0px;width:1.0px;height:17.0px;background:#333333;"></div>
<div class="t" style="left:913.6px;top:948.9px;font-size:13.49px;color:#6a6a6a;">Last request: 2233 ms</div>
<div class="t" style="left:1055.0px;top:950.0px;font-size:10px;color:#6a6a6a;">&#x2022;</div>
<div class="t" style="left:1068.0px;top:948.9px;font-size:13.5px;color:#6a6a6a;">40 FPS</div>
<div class="r" style="left:1120.3px;top:947.0px;width:1.0px;height:17.0px;background:#333333;"></div>
<div class="t" style="left:1131.0px;top:950.0px;font-size:10px;color:#6a6a6a;">&#x2022;</div>
<svg style="left:1146px;top:950px" width="9" height="11" viewBox="0 0 9 11"><path d="M4.5,0.5 L8.5,5 H6 V10.5 H3 V5 H0.5Z" fill="#6a6a6a"/></svg>
<div class="t" style="left:1160.6px;top:949.0px;font-size:13.3px;color:#6a6a6a;">376 B (0 B/s)</div>
<svg style="left:1249px;top:950px" width="9" height="11" viewBox="0 0 9 11"><path d="M4.5,10.5 L8.5,6 H6 V0.5 H3 V6 H0.5Z" fill="#6a6a6a"/></svg>
<div class="t" style="left:1264.0px;top:949.1px;font-size:13.22px;color:#6a6a6a;">65.85 MB (0 B/s)</div>
<div class="r" style="left:1374.7px;top:947.0px;width:1.0px;height:17.0px;background:#333333;"></div>
<svg style="left:1388px;top:949px" width="14" height="13" viewBox="0 0 14 13"><path d="M7,1 L13,3.8 V9.5 L7,12.3 L1,9.5 V3.8Z M1,3.8 L7,6.6 L13,3.8 M7,6.6 V12.3" fill="none" stroke="#6a6a6a" stroke-width="1.1"/></svg>
<div class="t" style="left:1405.0px;top:948.9px;font-size:13.5px;color:#6a6a6a;">30.41 MB</div>
<div class="t" style="left:1470.0px;top:950.0px;font-size:10px;color:#6a6a6a;">&#x2022;</div>
<svg style="left:1482px;top:949px" width="14" height="13" viewBox="0 0 14 13"><path d="M3,1.5 H11 L13,4 V11.5 H1 V4Z M4,6 H10 M4,8.5 H10" fill="none" stroke="#6a6a6a" stroke-width="1.2"/></svg>
<div class="t" style="left:1501.4px;top:949.0px;font-size:13.3px;color:#6a6a6a;">187.79 MB</div>
<div class="t" style="left:22.5px;top:91.5px;font-size:26.35px;color:rgb(250,34,36);font-weight:bold;">Connect to an example</div>
<div class="t" style="left:22.5px;top:124.3px;font-size:26.35px;color:rgb(250,34,36);font-weight:bold;">or your own project</div>
<div class="t" style="left:22.0px;top:258.7px;font-size:26.35px;color:rgb(250,34,36);font-weight:bold;">Basic run filtering</div>
<div class="t" style="left:22.5px;top:387.4px;font-size:26.35px;color:rgb(250,34,36);font-weight:bold;">Select which runs</div>
<div class="t" style="left:22.5px;top:420.2px;font-size:26.35px;color:rgb(250,34,36);font-weight:bold;">to compare by</div>
<div class="t" style="left:22.5px;top:452.9px;font-size:26.35px;color:rgb(250,34,36);font-weight:bold;">&nbsp;(ctrl) clicking</div>
<div class="t" style="left:22.5px;top:582.0px;font-size:26.35px;color:rgb(250,34,36);font-weight:bold;">Compare many run sets</div>
<div class="t" style="left:22.5px;top:614.7px;font-size:26.35px;color:rgb(250,34,36);font-weight:bold;">at the same time</div>
<div class="t" style="left:22.5px;top:719.7px;font-size:26.35px;color:rgb(250,34,36);font-weight:bold;">Compare configs of</div>
<div class="t" style="left:22.5px;top:753.5px;font-size:26.35px;color:rgb(250,34,36);font-weight:bold;">baselines vs candidates</div>
<div class="t" style="left:1586.0px;top:56.3px;font-size:26.35px;color:rgb(250,34,36);font-weight:bold;">Latex and animation</div>
<div class="t" style="left:1586.0px;top:88.6px;font-size:26.35px;color:rgb(250,34,36);font-weight:bold;">support</div>
<div class="t" style="left:1586.0px;top:188.5px;font-size:26.35px;color:rgb(250,34,36);font-weight:bold;">Quick metrics search</div>
<div class="t" style="left:1586.5px;top:308.4px;font-size:26.35px;color:rgb(250,34,36);font-weight:bold;">Metrics comparison with</div>
<div class="t" style="left:1586.5px;top:341.6px;font-size:26.35px;color:rgb(250,34,36);font-weight:bold;">100k+ points:</div>
<div class="t" style="left:1586.5px;top:374.5px;font-size:26.35px;color:rgb(250,34,36);font-weight:bold;">fast and smooth!</div>
<div class="t" style="left:1019.5px;top:126.0px;font-size:26.35px;color:rgb(250,34,36);font-weight:bold;">Update UI settings</div>
<div class="t" style="left:1019.5px;top:158.9px;font-size:26.35px;color:rgb(250,34,36);font-weight:bold;">+ showing plot info</div>
<div class="t" style="left:968.5px;top:986.2px;font-size:26.35px;color:rgb(250,34,36);font-weight:bold;">Highlight config differences across runs</div>
<svg width="1920" height="1039" style="z-index:50"><line x1="22.5" y1="163.4" x2="332.0" y2="163.4" stroke="#ff0a0a" stroke-width="3.3"/><path transform="translate(344.0,163.4) rotate(0)" d="M0,0 Q-9,-4.2 -19.8,-10.8 Q-17.8,0 -19.8,10.8 Q-9,4.2 0,0Z" fill="#ff0a0a"/><line x1="22.5" y1="300.1" x2="332.0" y2="300.1" stroke="#ff0a0a" stroke-width="3.3"/><path transform="translate(344.0,300.1) rotate(0)" d="M0,0 Q-9,-4.2 -19.8,-10.8 Q-17.8,0 -19.8,10.8 Q-9,4.2 0,0Z" fill="#ff0a0a"/><line x1="22.5" y1="492.4" x2="332.0" y2="492.4" stroke="#ff0a0a" stroke-width="3.3"/><path transform="translate(344.0,492.4) rotate(0)" d="M0,0 Q-9,-4.2 -19.8,-10.8 Q-17.8,0 -19.8,10.8 Q-9,4.2 0,0Z" fill="#ff0a0a"/><line x1="22.5" y1="655.1" x2="332.0" y2="655.1" stroke="#ff0a0a" stroke-width="3.3"/><path transform="translate(344.0,655.1) rotate(0)" d="M0,0 Q-9,-4.2 -19.8,-10.8 Q-17.8,0 -19.8,10.8 Q-9,4.2 0,0Z" fill="#ff0a0a"/><line x1="22.5" y1="790.2" x2="332.0" y2="790.2" stroke="#ff0a0a" stroke-width="3.3"/><path transform="translate(344.0,790.2) rotate(0)" d="M0,0 Q-9,-4.2 -19.8,-10.8 Q-17.8,0 -19.8,10.8 Q-9,4.2 0,0Z" fill="#ff0a0a"/><line x1="1897.2" y1="127.2" x2="1563.0" y2="127.2" stroke="#ff0a0a" stroke-width="3.3"/><path transform="translate(1551.0,127.2) rotate(180)" d="M0,0 Q-9,-4.2 -19.8,-10.8 Q-17.8,0 -19.8,10.8 Q-9,4.2 0,0Z" fill="#ff0a0a"/><line x1="1897.2" y1="226.2" x2="1565.0" y2="226.2" stroke="#ff0a0a" stroke-width="3.3"/><path transform="translate(1553.0,226.2) rotate(180)" d="M0,0 Q-9,-4.2 -19.8,-10.8 Q-17.8,0 -19.8,10.8 Q-9,4.2 0,0Z" fill="#ff0a0a"/><line x1="1897.2" y1="407.9" x2="1522.0" y2="407.9" stroke="#ff0a0a" stroke-width="3.3"/><path transform="translate(1510.0,407.9) rotate(180)" d="M0,0 Q-9,-4.2 -19.8,-10.8 Q-17.8,0 -19.8,10.8 Q-9,4.2 0,0Z" fill="#ff0a0a"/><polyline points="953.6,1001.4 718.7,1001.4 718.7,935" fill="none" stroke="#ff0a0a" stroke-width="3.3"/><path transform="translate(718.7,922.5) rotate(-90)" d="M0,0 Q-9,-4.2 -19.8,-10.8 Q-17.8,0 -19.8,10.8 Q-9,4.2 0,0Z" fill="#ff0a0a"/></svg>

</body></html>
